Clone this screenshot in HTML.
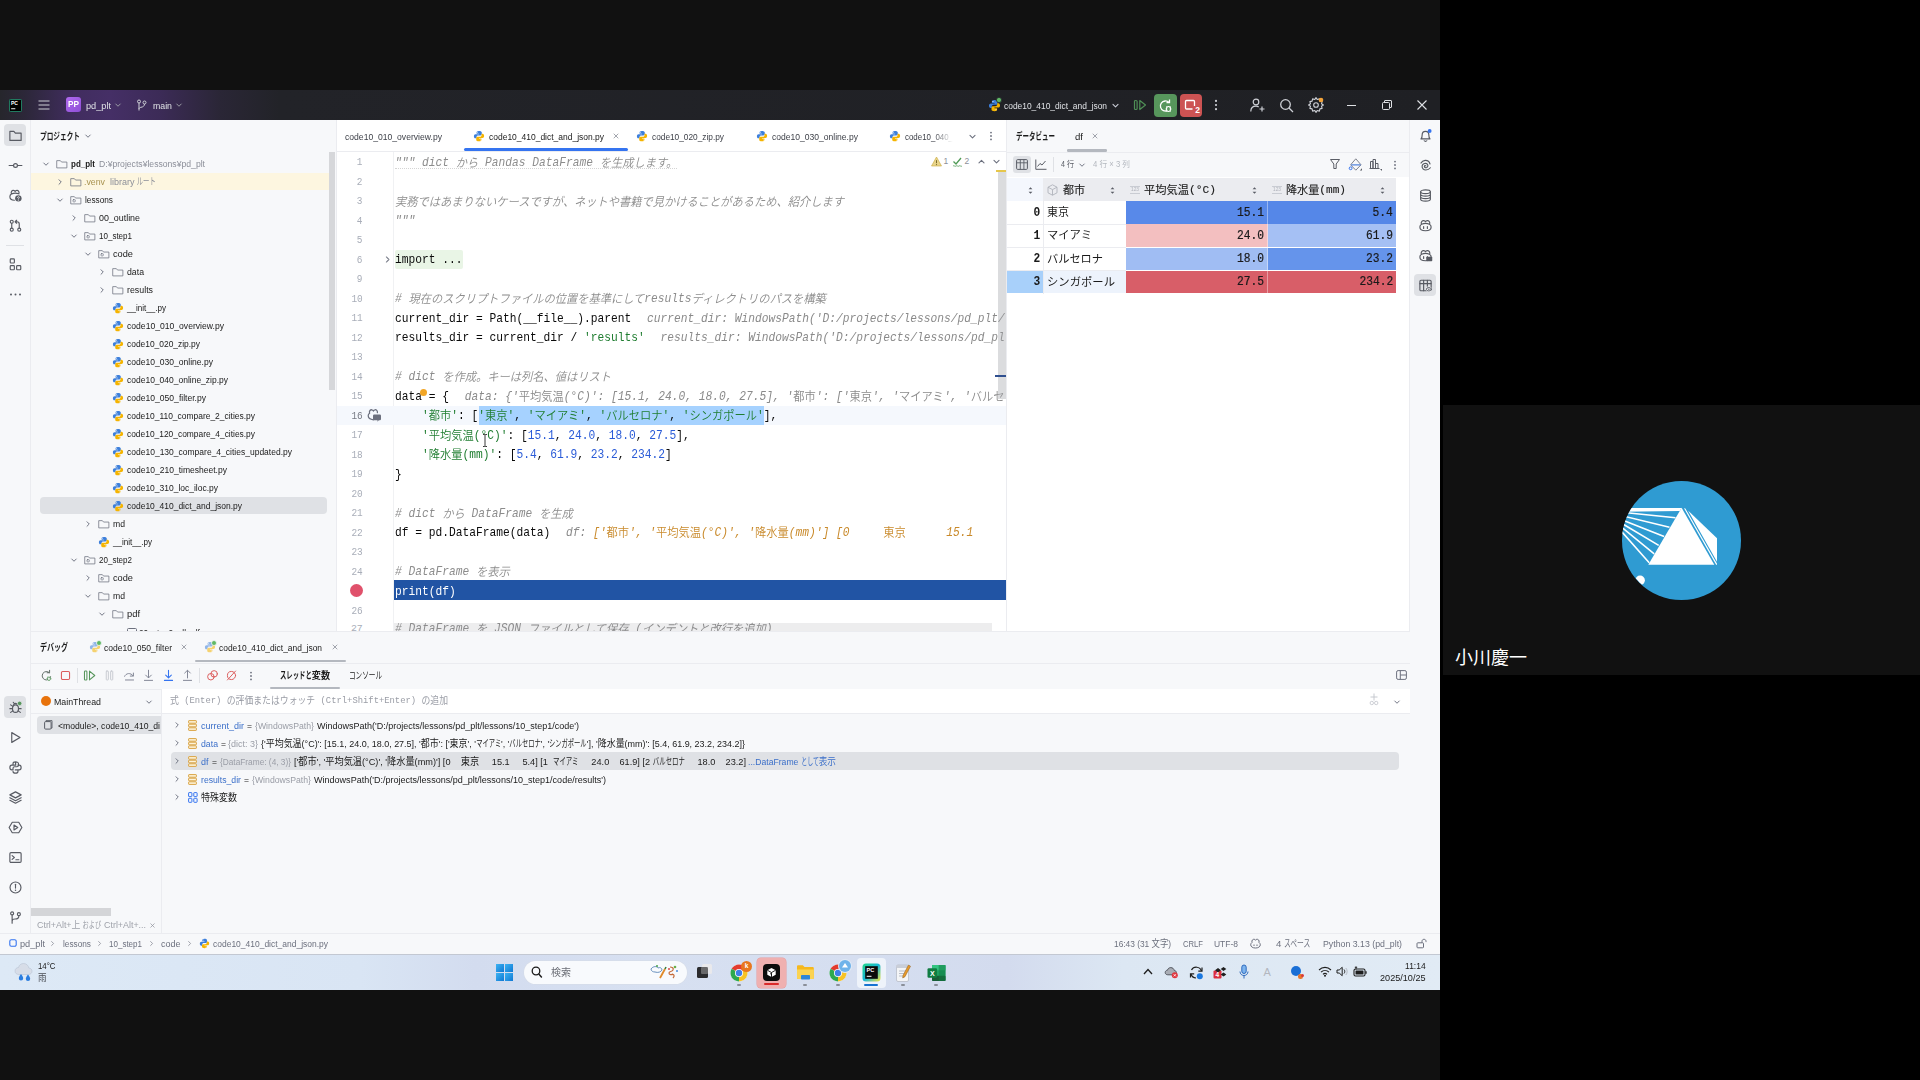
<!DOCTYPE html>
<html lang="ja"><head><meta charset="utf-8"><title>PyCharm screen share</title>
<style>
html,body{margin:0;padding:0;background:#000;}
body{width:1920px;height:1080px;overflow:hidden;position:relative;font-family:"Liberation Sans","Noto Sans CJK JP",sans-serif;}
.b{position:absolute;display:block;}
.t{position:absolute;white-space:nowrap;font-family:"Liberation Sans","Noto Sans CJK JP",sans-serif;}
.m{font-family:"Liberation Mono","Noto Sans CJK JP",monospace;}
.j{position:relative;top:1.1px;}
</style></head>
<body>
<div class="b" style="left:0px;top:0px;width:1440px;height:1080px;background:#111111;"></div>
<div class="b" style="left:1443px;top:405px;width:477px;height:270px;background:#111111;"></div>
<div class="b" style="left:0px;top:90px;width:1440px;height:900px;background:#f7f8fa;"></div>
<div class="b" style="left:1439px;top:120px;width:1px;height:870px;background:#ffffff;"></div>
<div class="b" style="left:0px;top:90px;width:1440px;height:30px;background:#1f2024;background:linear-gradient(90deg,#26262c 0,#2c2739 25px,#412d5f 75px,#452f66 110px,#3c2b57 160px,#2a2636 220px,#222328 280px,#1f2024 100%);"></div>
<svg class="b" style="left:8.5px;top:98.5px;" width="13" height="13" viewBox="0 0 14 14"><rect x=".5" y=".5" width="13" height="13" rx="1" fill="#000" stroke="#27a57c" stroke-width=".8"/><text x="2.2" y="6.8" font-family="Liberation Sans,sans-serif" font-weight="700" font-size="5.4" fill="#fff">PC</text><rect x="2.3" y="10" width="4.5" height="1" fill="#fff"/></svg>
<svg class="b" style="left:38px;top:99px;" width="12" height="12" viewBox="0 0 12 12"><path d="M0.500 2h11M0.500 6h11M0.500 10h11" stroke="#ced0d6" stroke-width="1.100"/></svg>
<div class="b" style="left:66px;top:97px;width:15px;height:15px;background:#a259e6;border-radius:3px;background:linear-gradient(135deg,#b06af0,#8f4fd6);"></div>
<div class="t" style="left:68.2px;top:98.80px;font-size:8.2px;line-height:12px;color:#ffffff;transform-origin:0 50%;transform:scaleX(1.0057);font-weight:700;">PP</div>
<div class="t" style="left:85.5px;top:97.50px;font-size:9.75px;line-height:15px;color:#dfe1e5;transform-origin:0 50%;transform:scaleX(0.9406);">pd_plt</div>
<svg class="b" style="left:113.5px;top:101.0px;" width="8" height="8" viewBox="0 0 16 16"><path d="M3.5 6l4.5 4.5L12.5 6" fill="none" stroke="#9da0a8" stroke-width="1.9" stroke-linecap="round" stroke-linejoin="round"/></svg>
<svg class="b" style="left:136px;top:99px;" width="11" height="12" viewBox="0 0 11 12"><circle cx="3" cy="2.500" r="1.500" fill="none" stroke="#ced0d6"/><circle cx="8.500" cy="3.500" r="1.500" fill="none" stroke="#ced0d6"/><path d="M3 4v7.500M8.500 5c0 2-1.500 3-3.500 3.300-1 .2-2 .6-2 1.700" fill="none" stroke="#ced0d6"/></svg>
<div class="t" style="left:152.5px;top:97.50px;font-size:9.75px;line-height:15px;color:#dfe1e5;transform-origin:0 50%;transform:scaleX(0.8987);">main</div>
<svg class="b" style="left:175.0px;top:101.0px;" width="8" height="8" viewBox="0 0 16 16"><path d="M3.5 6l4.5 4.5L12.5 6" fill="none" stroke="#9da0a8" stroke-width="1.9" stroke-linecap="round" stroke-linejoin="round"/></svg>
<svg class="b" style="left:987.5px;top:98.5px;" width="13" height="13" viewBox="0 0 16 16"><path d="M7.9 1.2c-2.6 0-3.1 1.1-3.1 2.1v1.6h3.3v.7H3.4C2 5.6 1.2 6.8 1.2 8.3s.7 2.8 2 2.8h1.5V9.3c0-1.2 1-2.1 2.2-2.1h3c1 0 1.8-.8 1.8-1.8V3.3c0-1.2-1.3-2.1-3.8-2.1z" fill="#3d7fdb"/><g transform="rotate(180 8 8.1)"><path d="M7.9 1.2c-2.6 0-3.1 1.1-3.1 2.1v1.6h3.3v.7H3.4C2 5.6 1.2 6.8 1.2 8.3s.7 2.8 2 2.8h1.5V9.3c0-1.2 1-2.1 2.2-2.1h3c1 0 1.8-.8 1.8-1.8V3.3c0-1.2-1.3-2.1-3.8-2.1z" fill="#f5b400"/></g><circle cx="6.1" cy="3" r=".65" fill="#fff"/><circle cx="9.9" cy="13.2" r=".65" fill="#fff"/></svg>
<svg class="b" style="left:996px;top:97px;" width="6" height="6" viewBox="0 0 6 6"><circle cx="3" cy="3" r="2.600" fill="#5fb865" stroke="#27282e" stroke-width=".8"/></svg>
<div class="t" style="left:1004px;top:97.50px;font-size:9.75px;line-height:15px;color:#dfe1e5;transform-origin:0 50%;transform:scaleX(0.8635);">code10_410_dict_and_json</div>
<svg class="b" style="left:1110.5px;top:100.5px;" width="9" height="9" viewBox="0 0 16 16"><path d="M3.5 6l4.5 4.5L12.5 6" fill="none" stroke="#c9ccd6" stroke-width="1.9" stroke-linecap="round" stroke-linejoin="round"/></svg>
<svg class="b" style="left:1133px;top:98px;" width="14" height="14" viewBox="0 0 14 14"><rect x="1.500" y="2.500" width="2.600" height="9" rx="1" fill="none" stroke="#4f8f56" stroke-width="1.200"/><path d="M6.800 2.500l5.700 4.500-5.700 4.500z" fill="none" stroke="#4f8f56" stroke-width="1.200" stroke-linejoin="round"/></svg>
<div class="b" style="left:1154px;top:94px;width:23px;height:23px;background:#57965c;border-radius:4px;"></div>
<svg class="b" style="left:1158px;top:98px;" width="15" height="15" viewBox="0 0 15 15"><path d="M11 4.500A5 5 0 1 0 12.300 9" fill="none" stroke="#fff" stroke-width="1.300"/><path d="M8.500 4.500h3v-3" fill="none" stroke="#fff" stroke-width="1.300"/><ellipse cx="10.500" cy="11" rx="2" ry="2.500" fill="#57965c" stroke="#fff" stroke-width="1.100"/><path d="M7.500 11h1M12.500 11h1M8 8.500l1 .8M13 8.500l-1 .8M8 13.500l1-.8M13 13.500l-1-.8" stroke="#fff" stroke-width=".9"/></svg>
<div class="b" style="left:1180px;top:94px;width:22px;height:23px;background:#cc5353;border-radius:4px;"></div>
<svg class="b" style="left:1184px;top:98px;" width="15" height="15" viewBox="0 0 15 15"><path d="M10.500 8V3.500a1 1 0 0 0-1-1h-7a1 1 0 0 0-1 1v6.500a1 1 0 0 0 1 1h6" fill="none" stroke="#fff" stroke-width="1.300"/></svg>
<div class="t" style="left:1195.3px;top:103.80px;font-size:8.5px;line-height:13px;color:#ffffff;transform-origin:0 50%;font-weight:700;">2</div>
<svg class="b" style="left:1210.0px;top:99.0px;" width="12" height="12" viewBox="0 0 16 16"><circle cx="8" cy="2.500" r="1.450" fill="#ced0d6"/><circle cx="8" cy="8" r="1.450" fill="#ced0d6"/><circle cx="8" cy="13.500" r="1.450" fill="#ced0d6"/></svg>
<svg class="b" style="left:1249px;top:97px;" width="16" height="16" viewBox="0 0 16 16"><circle cx="7" cy="5" r="2.800" fill="none" stroke="#ced0d6" stroke-width="1.200"/><path d="M1.800 14.500c0-3.500 2.200-5.300 5.200-5.300 1 0 2 .2 2.700.7M13 9.500v5M10.500 12h5" fill="none" stroke="#ced0d6" stroke-width="1.200"/></svg>
<svg class="b" style="left:1279px;top:98px;" width="15" height="15" viewBox="0 0 15 15"><circle cx="6.500" cy="6.500" r="4.800" fill="none" stroke="#ced0d6" stroke-width="1.300"/><path d="M10 10l4 4" stroke="#ced0d6" stroke-width="1.300"/></svg>
<svg class="b" style="left:1308px;top:97px;" width="16" height="16" viewBox="0 0 16 16"><path d="M8 1.800l1.200 1.900 2.200-.6.500 2.200 2.200.5-.600 2.200L15.400 9.200l-1.900 1.200.600 2.200-2.200.5-.5 2.200-2.200-.600L8 16.600l-1.200-1.900-2.200.600-.5-2.200-2.200-.5.600-2.200L.600 9.200l1.900-1.200-.600-2.200 2.200-.5.500-2.200 2.200.6z" transform="translate(0,-1.200)" fill="none" stroke="#ced0d6" stroke-width="1.100" stroke-linejoin="round"/><circle cx="8" cy="8" r="2.300" fill="none" stroke="#ced0d6" stroke-width="1.100"/><circle cx="13" cy="3" r="2.300" fill="#f2a33a"/></svg>
<div class="b" style="left:1347px;top:104.5px;width:9px;height:1px;background:#dfe1e5;"></div>
<svg class="b" style="left:1382px;top:100px;" width="10" height="10" viewBox="0 0 10 10"><rect x=".500" y="2.500" width="7" height="7" rx="1" fill="none" stroke="#dfe1e5"/><path d="M2.500 2.500v-1.500c0-.3.200-.5.500-.5h6c.3 0 .5.200.5.500v6c0 .3-.200.5-.5.5h-1.500" fill="none" stroke="#dfe1e5"/></svg>
<svg class="b" style="left:1417px;top:100px;" width="10" height="10" viewBox="0 0 10 10"><path d="M.500 .500l9 9M9.500 .500l-9 9" stroke="#dfe1e5" stroke-width="1.100"/></svg>
<div class="b" style="left:30px;top:120px;width:1px;height:813px;background:#ebecf0;"></div>
<div class="b" style="left:4px;top:124px;width:22px;height:22px;background:#dfe1e5;border-radius:4px;"></div>
<svg class="b" style="left:7.5px;top:127.5px;" width="15" height="15" viewBox="0 0 20 20"><path d="M2.5 4.5h5.3l2 2.4h7.7v9.6h-15z" fill="none" stroke="#585b63" stroke-width="1.55" stroke-linecap="round" stroke-linejoin="round"/></svg>
<svg class="b" style="left:7.5px;top:157.5px;" width="15" height="15" viewBox="0 0 20 20"><circle cx="10" cy="10" r="2.6" fill="none" stroke="#585b63" stroke-width="1.55" stroke-linecap="round" stroke-linejoin="round"/><path d="M1.5 10h5.9M12.6 10h5.9" fill="none" stroke="#585b63" stroke-width="1.55" stroke-linecap="round" stroke-linejoin="round"/></svg>
<svg class="b" style="left:7.5px;top:187.5px;" width="15" height="15" viewBox="0 0 20 20"><path d="M4.500 8c-1-3.500 1.200-5.300 3-4.800 1 .2 1.600.8 2 1.500.4-.7 1-1.300 2-1.500 1.800-.5 4 1.300 3 4.800M4.500 8c-1.300.8-2 2-2 3.500 0 2.500 2.500 4.500 6 4.800M4.800 7.800c2.500-1 7-1 9.400-.2" fill="none" stroke="#585b63" stroke-width="1.55" stroke-linecap="round" stroke-linejoin="round"/><circle cx="13.800" cy="13.800" r="4.300" fill="#585b63"/><path d="M12.600 12.600c.2-1.400 2.600-1.300 2.500.2-.1.900-1.300 1-1.300 2M13.800 16.300v.1" fill="none" stroke="#f7f8fa" stroke-width="1.100" stroke-linecap="round"/></svg>
<svg class="b" style="left:7.5px;top:217.5px;" width="15" height="15" viewBox="0 0 20 20"><circle cx="5" cy="5" r="2" fill="none" stroke="#585b63" stroke-width="1.55" stroke-linecap="round" stroke-linejoin="round"/><circle cx="5" cy="15.5" r="2" fill="none" stroke="#585b63" stroke-width="1.55" stroke-linecap="round" stroke-linejoin="round"/><circle cx="15" cy="15.5" r="2" fill="none" stroke="#585b63" stroke-width="1.55" stroke-linecap="round" stroke-linejoin="round"/><path d="M5 7v6.5M15 13.5V8c0-2-1-3-3-3h-2M11.5 3L9.5 5l2 2" fill="none" stroke="#585b63" stroke-width="1.55" stroke-linecap="round" stroke-linejoin="round"/></svg>
<svg class="b" style="left:7.5px;top:256.5px;" width="15" height="15" viewBox="0 0 20 20"><rect x="3" y="2.5" width="5.5" height="5.5" rx="1" fill="none" stroke="#585b63" stroke-width="1.55" stroke-linecap="round" stroke-linejoin="round"/><rect x="3" y="11.5" width="5.5" height="5.5" rx="1" fill="none" stroke="#585b63" stroke-width="1.55" stroke-linecap="round" stroke-linejoin="round"/><rect x="11.5" y="11.5" width="5.5" height="5.5" rx="1" fill="none" stroke="#585b63" stroke-width="1.55" stroke-linecap="round" stroke-linejoin="round"/></svg>
<svg class="b" style="left:7.5px;top:286.5px;" width="15" height="15" viewBox="0 0 20 20"><circle cx="4" cy="10" r="1.3" fill="#585b63"/><circle cx="10" cy="10" r="1.3" fill="#585b63"/><circle cx="16" cy="10" r="1.3" fill="#585b63"/></svg>
<div class="b" style="left:6px;top:245px;width:18px;height:1px;background:#dfe1e5;"></div>
<div class="b" style="left:4px;top:696px;width:22px;height:22px;background:#dfe1e5;border-radius:4px;"></div>
<svg class="b" style="left:7.5px;top:699.5px;" width="15" height="15" viewBox="0 0 20 20"><ellipse cx="10" cy="11.5" rx="4" ry="5" fill="none" stroke="#585b63" stroke-width="1.55" stroke-linecap="round" stroke-linejoin="round"/><path d="M7.5 7c0-1.5 1-2.5 2.5-2.5s2.500 1 2.500 2.500M6 11.500H2.500M6.500 8.500L3.500 6.500M6.500 14.500l-3 2M14 11.500h3.500M13.500 14.500l3 2M7 3l1.500 2" fill="none" stroke="#585b63" stroke-width="1.55" stroke-linecap="round" stroke-linejoin="round"/><circle cx="15.5" cy="4.500" r="3" fill="#57965c" stroke="#dfe1e5" stroke-width="1"/></svg>
<svg class="b" style="left:7.5px;top:729.5px;" width="15" height="15" viewBox="0 0 20 20"><path d="M5 3.500l11 6.500-11 6.500z" fill="none" stroke="#585b63" stroke-width="1.55" stroke-linecap="round" stroke-linejoin="round"/></svg>
<svg class="b" style="left:7.5px;top:759.5px;" width="15" height="15" viewBox="0 0 20 20"><path d="M10 2.500c-2.500 0-3.300 1-3.300 2.300v2h3.600M10.300 6.800H5c-1.700 0-2.500 1.400-2.500 3.200s.8 3.200 2.500 3.200h1.700v-2.200c0-1.200 1-2 2.200-2h3c1.200 0 2-.9 2-2V4.800c0-1.300-1.300-2.300-3.900-2.300z" fill="none" stroke="#585b63" stroke-width="1.55" stroke-linecap="round" stroke-linejoin="round"/><path d="M13.300 6.800H15c1.700 0 2.500 1.400 2.500 3.200s-.8 3.200-2.500 3.200H9.700M13.300 13.200v2c0 1.300-1 2.300-3.300 2.300s-3.300-1-3.300-2.300" fill="none" stroke="#585b63" stroke-width="1.55" stroke-linecap="round" stroke-linejoin="round"/></svg>
<svg class="b" style="left:7.5px;top:789.5px;" width="15" height="15" viewBox="0 0 20 20"><path d="M10 2.500l7.500 4-7.500 4-7.500-4zM2.500 10.200l7.500 4 7.500-4M2.500 13.700l7.500 4 7.500-4" fill="none" stroke="#585b63" stroke-width="1.55" stroke-linecap="round" stroke-linejoin="round"/></svg>
<svg class="b" style="left:7.5px;top:819.5px;" width="15" height="15" viewBox="0 0 20 20"><path d="M1.500 10L5.700 3h8.600l4.200 7-4.200 7H5.700z" fill="none" stroke="#585b63" stroke-width="1.55" stroke-linecap="round" stroke-linejoin="round"/><path d="M8 6.800l5 3.200-5 3.200z" fill="none" stroke="#585b63" stroke-width="1.55" stroke-linecap="round" stroke-linejoin="round"/></svg>
<svg class="b" style="left:7.5px;top:849.5px;" width="15" height="15" viewBox="0 0 20 20"><rect x="2.500" y="3.500" width="15" height="13" rx="1.500" fill="none" stroke="#585b63" stroke-width="1.55" stroke-linecap="round" stroke-linejoin="round"/><path d="M5.500 7.500l3 2.500-3 2.500M10.500 13h4" fill="none" stroke="#585b63" stroke-width="1.55" stroke-linecap="round" stroke-linejoin="round"/></svg>
<svg class="b" style="left:7.5px;top:879.5px;" width="15" height="15" viewBox="0 0 20 20"><circle cx="10" cy="10" r="7.300" fill="none" stroke="#585b63" stroke-width="1.55" stroke-linecap="round" stroke-linejoin="round"/><path d="M10 5.800v5" fill="none" stroke="#585b63" stroke-width="1.5" stroke-linecap="round" stroke-linejoin="round"/><circle cx="10" cy="13.800" r="1" fill="#585b63"/></svg>
<svg class="b" style="left:7.5px;top:909.5px;" width="15" height="15" viewBox="0 0 20 20"><circle cx="5.500" cy="4.500" r="2" fill="none" stroke="#585b63" stroke-width="1.55" stroke-linecap="round" stroke-linejoin="round"/><circle cx="14.500" cy="5.500" r="2" fill="none" stroke="#585b63" stroke-width="1.55" stroke-linecap="round" stroke-linejoin="round"/><path d="M5.500 6.500v11M14.500 7.500c0 3-2 4.500-5 4.500-2 0-4 .8-4 2.500" fill="none" stroke="#585b63" stroke-width="1.55" stroke-linecap="round" stroke-linejoin="round"/></svg>
<div class="t" style="left:40px;top:128.50px;font-size:9.75px;line-height:15px;color:#1a1a1a;transform-origin:0 50%;transform:scaleX(0.9767);font-weight:700;"><span style="display:inline-block;transform:scaleX(0.7);transform-origin:0 50%;margin-right:-17.55px">プロジェクト</span></div>
<svg class="b" style="left:84.0px;top:132.0px;" width="8" height="8" viewBox="0 0 16 16"><path d="M3.5 6l4.5 4.5L12.5 6" fill="none" stroke="#6c707e" stroke-width="1.9" stroke-linecap="round" stroke-linejoin="round"/></svg>
<div class="b" style="left:329px;top:152px;width:6px;height:238px;background:#d6d7da;border-radius:0;"></div>
<div class="b" style="left:336px;top:120px;width:1px;height:512px;background:#ebecf0;"></div>
<div class="b" style="left:31px;top:173px;width:298px;height:17px;background:#fdf6e0;"></div>
<div class="b" style="left:40px;top:497px;width:287px;height:17px;background:#dfe1e5;border-radius:4px;"></div>
<svg class="b" style="left:42.0px;top:159.5px;" width="8" height="8" viewBox="0 0 16 16"><path d="M3.5 6l4.5 4.5L12.5 6" fill="none" stroke="#6c707e" stroke-width="1.9" stroke-linecap="round" stroke-linejoin="round"/></svg>
<svg class="b" style="left:56.2px;top:157.5px;" width="12" height="12" viewBox="0 0 16 16"><path d="M1.5 3.5h4.3l1.6 1.9h7.1v7.8h-13z" fill="none" stroke="#6c707e" stroke-width="1" stroke-linecap="round" stroke-linejoin="round"/></svg>
<div class="t" style="left:71.2px;top:156.00px;font-size:9.75px;line-height:15px;color:#1a1a1a;transform-origin:0 50%;transform:scaleX(0.8205);font-weight:700;">pd_plt</div>
<div class="t" style="left:99.2px;top:156.00px;font-size:9.75px;line-height:15px;color:#8c8f99;transform-origin:0 50%;transform:scaleX(0.8849);">D:¥projects¥lessons¥pd_plt</div>
<svg class="b" style="left:56.0px;top:177.5px;" width="8" height="8" viewBox="0 0 16 16"><path d="M6 3.5l4.5 4.5L6 12.5" fill="none" stroke="#6c707e" stroke-width="1.9" stroke-linecap="round" stroke-linejoin="round"/></svg>
<svg class="b" style="left:70.2px;top:175.5px;" width="12" height="12" viewBox="0 0 16 16"><path d="M1.5 3.5h4.3l1.6 1.9h7.1v7.8h-13z" fill="none" stroke="#6c707e" stroke-width="1" stroke-linecap="round" stroke-linejoin="round"/></svg>
<div class="t" style="left:84.0px;top:174.00px;font-size:9.75px;line-height:15px;color:#a8924f;transform-origin:0 50%;transform:scaleX(0.9008);">.venv</div>
<div class="t" style="left:110.2px;top:174.00px;font-size:9.75px;line-height:15px;color:#8c8f99;transform-origin:0 50%;transform:scaleX(0.9246);">library <span style="display:inline-block;transform:scaleX(0.7);transform-origin:0 50%;margin-right:-8.78px">ルート</span></div>
<svg class="b" style="left:56.0px;top:195.5px;" width="8" height="8" viewBox="0 0 16 16"><path d="M3.5 6l4.5 4.5L12.5 6" fill="none" stroke="#6c707e" stroke-width="1.9" stroke-linecap="round" stroke-linejoin="round"/></svg>
<svg class="b" style="left:70.2px;top:193.5px;" width="12" height="12" viewBox="0 0 16 16"><path d="M1.5 3.5h4.3l1.6 1.9h7.1v7.8h-13z" fill="none" stroke="#6c707e" stroke-width="1" stroke-linecap="round" stroke-linejoin="round"/><rect x="4" y="7.5" width="3" height="3" rx=".6" fill="none" stroke="#6c707e" stroke-width="0.9" stroke-linecap="round" stroke-linejoin="round"/></svg>
<div class="t" style="left:85.2px;top:192.00px;font-size:9.75px;line-height:15px;color:#1a1a1a;transform-origin:0 50%;transform:scaleX(0.8469);">lessons</div>
<svg class="b" style="left:70.0px;top:213.5px;" width="8" height="8" viewBox="0 0 16 16"><path d="M6 3.5l4.5 4.5L6 12.5" fill="none" stroke="#6c707e" stroke-width="1.9" stroke-linecap="round" stroke-linejoin="round"/></svg>
<svg class="b" style="left:84.2px;top:211.5px;" width="12" height="12" viewBox="0 0 16 16"><path d="M1.5 3.5h4.3l1.6 1.9h7.1v7.8h-13z" fill="none" stroke="#6c707e" stroke-width="1" stroke-linecap="round" stroke-linejoin="round"/></svg>
<div class="t" style="left:99.2px;top:210.00px;font-size:9.75px;line-height:15px;color:#1a1a1a;transform-origin:0 50%;transform:scaleX(0.9111);">00_outline</div>
<svg class="b" style="left:70.0px;top:231.5px;" width="8" height="8" viewBox="0 0 16 16"><path d="M3.5 6l4.5 4.5L12.5 6" fill="none" stroke="#6c707e" stroke-width="1.9" stroke-linecap="round" stroke-linejoin="round"/></svg>
<svg class="b" style="left:84.2px;top:229.5px;" width="12" height="12" viewBox="0 0 16 16"><path d="M1.5 3.5h4.3l1.6 1.9h7.1v7.8h-13z" fill="none" stroke="#6c707e" stroke-width="1" stroke-linecap="round" stroke-linejoin="round"/><rect x="4" y="7.5" width="3" height="3" rx=".6" fill="none" stroke="#6c707e" stroke-width="0.9" stroke-linecap="round" stroke-linejoin="round"/></svg>
<div class="t" style="left:99.2px;top:228.00px;font-size:9.75px;line-height:15px;color:#1a1a1a;transform-origin:0 50%;transform:scaleX(0.8224);">10_step1</div>
<svg class="b" style="left:84.0px;top:249.5px;" width="8" height="8" viewBox="0 0 16 16"><path d="M3.5 6l4.5 4.5L12.5 6" fill="none" stroke="#6c707e" stroke-width="1.9" stroke-linecap="round" stroke-linejoin="round"/></svg>
<svg class="b" style="left:98.2px;top:247.5px;" width="12" height="12" viewBox="0 0 16 16"><path d="M1.5 3.5h4.3l1.6 1.9h7.1v7.8h-13z" fill="none" stroke="#6c707e" stroke-width="1" stroke-linecap="round" stroke-linejoin="round"/><rect x="4" y="7.5" width="3" height="3" rx=".6" fill="none" stroke="#6c707e" stroke-width="0.9" stroke-linecap="round" stroke-linejoin="round"/></svg>
<div class="t" style="left:113.2px;top:246.00px;font-size:9.75px;line-height:15px;color:#1a1a1a;transform-origin:0 50%;transform:scaleX(0.9453);">code</div>
<svg class="b" style="left:98.0px;top:267.5px;" width="8" height="8" viewBox="0 0 16 16"><path d="M6 3.5l4.5 4.5L6 12.5" fill="none" stroke="#6c707e" stroke-width="1.9" stroke-linecap="round" stroke-linejoin="round"/></svg>
<svg class="b" style="left:112.2px;top:265.5px;" width="12" height="12" viewBox="0 0 16 16"><path d="M1.5 3.5h4.3l1.6 1.9h7.1v7.8h-13z" fill="none" stroke="#6c707e" stroke-width="1" stroke-linecap="round" stroke-linejoin="round"/></svg>
<div class="t" style="left:127.2px;top:264.00px;font-size:9.75px;line-height:15px;color:#1a1a1a;transform-origin:0 50%;transform:scaleX(0.8955);">data</div>
<svg class="b" style="left:98.0px;top:285.5px;" width="8" height="8" viewBox="0 0 16 16"><path d="M6 3.5l4.5 4.5L6 12.5" fill="none" stroke="#6c707e" stroke-width="1.9" stroke-linecap="round" stroke-linejoin="round"/></svg>
<svg class="b" style="left:112.2px;top:283.5px;" width="12" height="12" viewBox="0 0 16 16"><path d="M1.5 3.5h4.3l1.6 1.9h7.1v7.8h-13z" fill="none" stroke="#6c707e" stroke-width="1" stroke-linecap="round" stroke-linejoin="round"/></svg>
<div class="t" style="left:127.2px;top:282.00px;font-size:9.75px;line-height:15px;color:#1a1a1a;transform-origin:0 50%;transform:scaleX(0.9053);">results</div>
<svg class="b" style="left:112.2px;top:301.5px;" width="12" height="12" viewBox="0 0 16 16"><path d="M7.9 1.2c-2.6 0-3.1 1.1-3.1 2.1v1.6h3.3v.7H3.4C2 5.6 1.2 6.8 1.2 8.3s.7 2.8 2 2.8h1.5V9.3c0-1.2 1-2.1 2.2-2.1h3c1 0 1.8-.8 1.8-1.8V3.3c0-1.2-1.3-2.1-3.8-2.1z" fill="#3d7fdb"/><g transform="rotate(180 8 8.1)"><path d="M7.9 1.2c-2.6 0-3.1 1.1-3.1 2.1v1.6h3.3v.7H3.4C2 5.6 1.2 6.8 1.2 8.3s.7 2.8 2 2.8h1.5V9.3c0-1.2 1-2.1 2.2-2.1h3c1 0 1.8-.8 1.8-1.8V3.3c0-1.2-1.3-2.1-3.8-2.1z" fill="#f5b400"/></g><circle cx="6.1" cy="3" r=".65" fill="#fff"/><circle cx="9.9" cy="13.2" r=".65" fill="#fff"/></svg>
<div class="t" style="left:127.2px;top:300.00px;font-size:9.75px;line-height:15px;color:#1a1a1a;transform-origin:0 50%;transform:scaleX(0.8268);">__init__.py</div>
<svg class="b" style="left:112.2px;top:319.5px;" width="12" height="12" viewBox="0 0 16 16"><path d="M7.9 1.2c-2.6 0-3.1 1.1-3.1 2.1v1.6h3.3v.7H3.4C2 5.6 1.2 6.8 1.2 8.3s.7 2.8 2 2.8h1.5V9.3c0-1.2 1-2.1 2.2-2.1h3c1 0 1.8-.8 1.8-1.8V3.3c0-1.2-1.3-2.1-3.8-2.1z" fill="#3d7fdb"/><g transform="rotate(180 8 8.1)"><path d="M7.9 1.2c-2.6 0-3.1 1.1-3.1 2.1v1.6h3.3v.7H3.4C2 5.6 1.2 6.8 1.2 8.3s.7 2.8 2 2.8h1.5V9.3c0-1.2 1-2.1 2.2-2.1h3c1 0 1.8-.8 1.8-1.8V3.3c0-1.2-1.3-2.1-3.8-2.1z" fill="#f5b400"/></g><circle cx="6.1" cy="3" r=".65" fill="#fff"/><circle cx="9.9" cy="13.2" r=".65" fill="#fff"/></svg>
<div class="t" style="left:127.2px;top:318.00px;font-size:9.75px;line-height:15px;color:#1a1a1a;transform-origin:0 50%;transform:scaleX(0.8814);">code10_010_overview.py</div>
<svg class="b" style="left:112.2px;top:337.5px;" width="12" height="12" viewBox="0 0 16 16"><path d="M7.9 1.2c-2.6 0-3.1 1.1-3.1 2.1v1.6h3.3v.7H3.4C2 5.6 1.2 6.8 1.2 8.3s.7 2.8 2 2.8h1.5V9.3c0-1.2 1-2.1 2.2-2.1h3c1 0 1.8-.8 1.8-1.8V3.3c0-1.2-1.3-2.1-3.8-2.1z" fill="#3d7fdb"/><g transform="rotate(180 8 8.1)"><path d="M7.9 1.2c-2.6 0-3.1 1.1-3.1 2.1v1.6h3.3v.7H3.4C2 5.6 1.2 6.8 1.2 8.3s.7 2.8 2 2.8h1.5V9.3c0-1.2 1-2.1 2.2-2.1h3c1 0 1.8-.8 1.8-1.8V3.3c0-1.2-1.3-2.1-3.8-2.1z" fill="#f5b400"/></g><circle cx="6.1" cy="3" r=".65" fill="#fff"/><circle cx="9.9" cy="13.2" r=".65" fill="#fff"/></svg>
<div class="t" style="left:127.2px;top:336.00px;font-size:9.75px;line-height:15px;color:#1a1a1a;transform-origin:0 50%;transform:scaleX(0.8631);">code10_020_zip.py</div>
<svg class="b" style="left:112.2px;top:355.5px;" width="12" height="12" viewBox="0 0 16 16"><path d="M7.9 1.2c-2.6 0-3.1 1.1-3.1 2.1v1.6h3.3v.7H3.4C2 5.6 1.2 6.8 1.2 8.3s.7 2.8 2 2.8h1.5V9.3c0-1.2 1-2.1 2.2-2.1h3c1 0 1.8-.8 1.8-1.8V3.3c0-1.2-1.3-2.1-3.8-2.1z" fill="#3d7fdb"/><g transform="rotate(180 8 8.1)"><path d="M7.9 1.2c-2.6 0-3.1 1.1-3.1 2.1v1.6h3.3v.7H3.4C2 5.6 1.2 6.8 1.2 8.3s.7 2.8 2 2.8h1.5V9.3c0-1.2 1-2.1 2.2-2.1h3c1 0 1.8-.8 1.8-1.8V3.3c0-1.2-1.3-2.1-3.8-2.1z" fill="#f5b400"/></g><circle cx="6.1" cy="3" r=".65" fill="#fff"/><circle cx="9.9" cy="13.2" r=".65" fill="#fff"/></svg>
<div class="t" style="left:127.2px;top:354.00px;font-size:9.75px;line-height:15px;color:#1a1a1a;transform-origin:0 50%;transform:scaleX(0.8763);">code10_030_online.py</div>
<svg class="b" style="left:112.2px;top:373.5px;" width="12" height="12" viewBox="0 0 16 16"><path d="M7.9 1.2c-2.6 0-3.1 1.1-3.1 2.1v1.6h3.3v.7H3.4C2 5.6 1.2 6.8 1.2 8.3s.7 2.8 2 2.8h1.5V9.3c0-1.2 1-2.1 2.2-2.1h3c1 0 1.8-.8 1.8-1.8V3.3c0-1.2-1.3-2.1-3.8-2.1z" fill="#3d7fdb"/><g transform="rotate(180 8 8.1)"><path d="M7.9 1.2c-2.6 0-3.1 1.1-3.1 2.1v1.6h3.3v.7H3.4C2 5.6 1.2 6.8 1.2 8.3s.7 2.8 2 2.8h1.5V9.3c0-1.2 1-2.1 2.2-2.1h3c1 0 1.8-.8 1.8-1.8V3.3c0-1.2-1.3-2.1-3.8-2.1z" fill="#f5b400"/></g><circle cx="6.1" cy="3" r=".65" fill="#fff"/><circle cx="9.9" cy="13.2" r=".65" fill="#fff"/></svg>
<div class="t" style="left:127.2px;top:372.00px;font-size:9.75px;line-height:15px;color:#1a1a1a;transform-origin:0 50%;transform:scaleX(0.8706);">code10_040_online_zip.py</div>
<svg class="b" style="left:112.2px;top:391.5px;" width="12" height="12" viewBox="0 0 16 16"><path d="M7.9 1.2c-2.6 0-3.1 1.1-3.1 2.1v1.6h3.3v.7H3.4C2 5.6 1.2 6.8 1.2 8.3s.7 2.8 2 2.8h1.5V9.3c0-1.2 1-2.1 2.2-2.1h3c1 0 1.8-.8 1.8-1.8V3.3c0-1.2-1.3-2.1-3.8-2.1z" fill="#3d7fdb"/><g transform="rotate(180 8 8.1)"><path d="M7.9 1.2c-2.6 0-3.1 1.1-3.1 2.1v1.6h3.3v.7H3.4C2 5.6 1.2 6.8 1.2 8.3s.7 2.8 2 2.8h1.5V9.3c0-1.2 1-2.1 2.2-2.1h3c1 0 1.8-.8 1.8-1.8V3.3c0-1.2-1.3-2.1-3.8-2.1z" fill="#f5b400"/></g><circle cx="6.1" cy="3" r=".65" fill="#fff"/><circle cx="9.9" cy="13.2" r=".65" fill="#fff"/></svg>
<div class="t" style="left:127.2px;top:390.00px;font-size:9.75px;line-height:15px;color:#1a1a1a;transform-origin:0 50%;transform:scaleX(0.8778);">code10_050_filter.py</div>
<svg class="b" style="left:112.2px;top:409.5px;" width="12" height="12" viewBox="0 0 16 16"><path d="M7.9 1.2c-2.6 0-3.1 1.1-3.1 2.1v1.6h3.3v.7H3.4C2 5.6 1.2 6.8 1.2 8.3s.7 2.8 2 2.8h1.5V9.3c0-1.2 1-2.1 2.2-2.1h3c1 0 1.8-.8 1.8-1.8V3.3c0-1.2-1.3-2.1-3.8-2.1z" fill="#3d7fdb"/><g transform="rotate(180 8 8.1)"><path d="M7.9 1.2c-2.6 0-3.1 1.1-3.1 2.1v1.6h3.3v.7H3.4C2 5.6 1.2 6.8 1.2 8.3s.7 2.8 2 2.8h1.5V9.3c0-1.2 1-2.1 2.2-2.1h3c1 0 1.8-.8 1.8-1.8V3.3c0-1.2-1.3-2.1-3.8-2.1z" fill="#f5b400"/></g><circle cx="6.1" cy="3" r=".65" fill="#fff"/><circle cx="9.9" cy="13.2" r=".65" fill="#fff"/></svg>
<div class="t" style="left:127.2px;top:408.00px;font-size:9.75px;line-height:15px;color:#1a1a1a;transform-origin:0 50%;transform:scaleX(0.8660);">code10_110_compare_2_cities.py</div>
<svg class="b" style="left:112.2px;top:427.5px;" width="12" height="12" viewBox="0 0 16 16"><path d="M7.9 1.2c-2.6 0-3.1 1.1-3.1 2.1v1.6h3.3v.7H3.4C2 5.6 1.2 6.8 1.2 8.3s.7 2.8 2 2.8h1.5V9.3c0-1.2 1-2.1 2.2-2.1h3c1 0 1.8-.8 1.8-1.8V3.3c0-1.2-1.3-2.1-3.8-2.1z" fill="#3d7fdb"/><g transform="rotate(180 8 8.1)"><path d="M7.9 1.2c-2.6 0-3.1 1.1-3.1 2.1v1.6h3.3v.7H3.4C2 5.6 1.2 6.8 1.2 8.3s.7 2.8 2 2.8h1.5V9.3c0-1.2 1-2.1 2.2-2.1h3c1 0 1.8-.8 1.8-1.8V3.3c0-1.2-1.3-2.1-3.8-2.1z" fill="#f5b400"/></g><circle cx="6.1" cy="3" r=".65" fill="#fff"/><circle cx="9.9" cy="13.2" r=".65" fill="#fff"/></svg>
<div class="t" style="left:127.2px;top:426.00px;font-size:9.75px;line-height:15px;color:#1a1a1a;transform-origin:0 50%;transform:scaleX(0.8618);">code10_120_compare_4_cities.py</div>
<svg class="b" style="left:112.2px;top:445.5px;" width="12" height="12" viewBox="0 0 16 16"><path d="M7.9 1.2c-2.6 0-3.1 1.1-3.1 2.1v1.6h3.3v.7H3.4C2 5.6 1.2 6.8 1.2 8.3s.7 2.8 2 2.8h1.5V9.3c0-1.2 1-2.1 2.2-2.1h3c1 0 1.8-.8 1.8-1.8V3.3c0-1.2-1.3-2.1-3.8-2.1z" fill="#3d7fdb"/><g transform="rotate(180 8 8.1)"><path d="M7.9 1.2c-2.6 0-3.1 1.1-3.1 2.1v1.6h3.3v.7H3.4C2 5.6 1.2 6.8 1.2 8.3s.7 2.8 2 2.8h1.5V9.3c0-1.2 1-2.1 2.2-2.1h3c1 0 1.8-.8 1.8-1.8V3.3c0-1.2-1.3-2.1-3.8-2.1z" fill="#f5b400"/></g><circle cx="6.1" cy="3" r=".65" fill="#fff"/><circle cx="9.9" cy="13.2" r=".65" fill="#fff"/></svg>
<div class="t" style="left:127.2px;top:444.00px;font-size:9.75px;line-height:15px;color:#1a1a1a;transform-origin:0 50%;transform:scaleX(0.8722);">code10_130_compare_4_cities_updated.py</div>
<svg class="b" style="left:112.2px;top:463.5px;" width="12" height="12" viewBox="0 0 16 16"><path d="M7.9 1.2c-2.6 0-3.1 1.1-3.1 2.1v1.6h3.3v.7H3.4C2 5.6 1.2 6.8 1.2 8.3s.7 2.8 2 2.8h1.5V9.3c0-1.2 1-2.1 2.2-2.1h3c1 0 1.8-.8 1.8-1.8V3.3c0-1.2-1.3-2.1-3.8-2.1z" fill="#3d7fdb"/><g transform="rotate(180 8 8.1)"><path d="M7.9 1.2c-2.6 0-3.1 1.1-3.1 2.1v1.6h3.3v.7H3.4C2 5.6 1.2 6.8 1.2 8.3s.7 2.8 2 2.8h1.5V9.3c0-1.2 1-2.1 2.2-2.1h3c1 0 1.8-.8 1.8-1.8V3.3c0-1.2-1.3-2.1-3.8-2.1z" fill="#f5b400"/></g><circle cx="6.1" cy="3" r=".65" fill="#fff"/><circle cx="9.9" cy="13.2" r=".65" fill="#fff"/></svg>
<div class="t" style="left:127.2px;top:462.00px;font-size:9.75px;line-height:15px;color:#1a1a1a;transform-origin:0 50%;transform:scaleX(0.8742);">code10_210_timesheet.py</div>
<svg class="b" style="left:112.2px;top:481.5px;" width="12" height="12" viewBox="0 0 16 16"><path d="M7.9 1.2c-2.6 0-3.1 1.1-3.1 2.1v1.6h3.3v.7H3.4C2 5.6 1.2 6.8 1.2 8.3s.7 2.8 2 2.8h1.5V9.3c0-1.2 1-2.1 2.2-2.1h3c1 0 1.8-.8 1.8-1.8V3.3c0-1.2-1.3-2.1-3.8-2.1z" fill="#3d7fdb"/><g transform="rotate(180 8 8.1)"><path d="M7.9 1.2c-2.6 0-3.1 1.1-3.1 2.1v1.6h3.3v.7H3.4C2 5.6 1.2 6.8 1.2 8.3s.7 2.8 2 2.8h1.5V9.3c0-1.2 1-2.1 2.2-2.1h3c1 0 1.8-.8 1.8-1.8V3.3c0-1.2-1.3-2.1-3.8-2.1z" fill="#f5b400"/></g><circle cx="6.1" cy="3" r=".65" fill="#fff"/><circle cx="9.9" cy="13.2" r=".65" fill="#fff"/></svg>
<div class="t" style="left:127.2px;top:480.00px;font-size:9.75px;line-height:15px;color:#1a1a1a;transform-origin:0 50%;transform:scaleX(0.8698);">code10_310_loc_iloc.py</div>
<svg class="b" style="left:112.2px;top:499.5px;" width="12" height="12" viewBox="0 0 16 16"><path d="M7.9 1.2c-2.6 0-3.1 1.1-3.1 2.1v1.6h3.3v.7H3.4C2 5.6 1.2 6.8 1.2 8.3s.7 2.8 2 2.8h1.5V9.3c0-1.2 1-2.1 2.2-2.1h3c1 0 1.8-.8 1.8-1.8V3.3c0-1.2-1.3-2.1-3.8-2.1z" fill="#3d7fdb"/><g transform="rotate(180 8 8.1)"><path d="M7.9 1.2c-2.6 0-3.1 1.1-3.1 2.1v1.6h3.3v.7H3.4C2 5.6 1.2 6.8 1.2 8.3s.7 2.8 2 2.8h1.5V9.3c0-1.2 1-2.1 2.2-2.1h3c1 0 1.8-.8 1.8-1.8V3.3c0-1.2-1.3-2.1-3.8-2.1z" fill="#f5b400"/></g><circle cx="6.1" cy="3" r=".65" fill="#fff"/><circle cx="9.9" cy="13.2" r=".65" fill="#fff"/></svg>
<div class="t" style="left:127.2px;top:498.00px;font-size:9.75px;line-height:15px;color:#1a1a1a;transform-origin:0 50%;transform:scaleX(0.8694);">code10_410_dict_and_json.py</div>
<svg class="b" style="left:84.0px;top:519.5px;" width="8" height="8" viewBox="0 0 16 16"><path d="M6 3.5l4.5 4.5L6 12.5" fill="none" stroke="#6c707e" stroke-width="1.9" stroke-linecap="round" stroke-linejoin="round"/></svg>
<svg class="b" style="left:98.2px;top:517.5px;" width="12" height="12" viewBox="0 0 16 16"><path d="M1.5 3.5h4.3l1.6 1.9h7.1v7.8h-13z" fill="none" stroke="#6c707e" stroke-width="1" stroke-linecap="round" stroke-linejoin="round"/></svg>
<div class="t" style="left:113.2px;top:516.00px;font-size:9.75px;line-height:15px;color:#1a1a1a;transform-origin:0 50%;transform:scaleX(0.8858);">md</div>
<svg class="b" style="left:98.2px;top:535.5px;" width="12" height="12" viewBox="0 0 16 16"><path d="M7.9 1.2c-2.6 0-3.1 1.1-3.1 2.1v1.6h3.3v.7H3.4C2 5.6 1.2 6.8 1.2 8.3s.7 2.8 2 2.8h1.5V9.3c0-1.2 1-2.1 2.2-2.1h3c1 0 1.8-.8 1.8-1.8V3.3c0-1.2-1.3-2.1-3.8-2.1z" fill="#3d7fdb"/><g transform="rotate(180 8 8.1)"><path d="M7.9 1.2c-2.6 0-3.1 1.1-3.1 2.1v1.6h3.3v.7H3.4C2 5.6 1.2 6.8 1.2 8.3s.7 2.8 2 2.8h1.5V9.3c0-1.2 1-2.1 2.2-2.1h3c1 0 1.8-.8 1.8-1.8V3.3c0-1.2-1.3-2.1-3.8-2.1z" fill="#f5b400"/></g><circle cx="6.1" cy="3" r=".65" fill="#fff"/><circle cx="9.9" cy="13.2" r=".65" fill="#fff"/></svg>
<div class="t" style="left:113.2px;top:534.00px;font-size:9.75px;line-height:15px;color:#1a1a1a;transform-origin:0 50%;transform:scaleX(0.8268);">__init__.py</div>
<svg class="b" style="left:70.0px;top:555.5px;" width="8" height="8" viewBox="0 0 16 16"><path d="M3.5 6l4.5 4.5L12.5 6" fill="none" stroke="#6c707e" stroke-width="1.9" stroke-linecap="round" stroke-linejoin="round"/></svg>
<svg class="b" style="left:84.2px;top:553.5px;" width="12" height="12" viewBox="0 0 16 16"><path d="M1.5 3.5h4.3l1.6 1.9h7.1v7.8h-13z" fill="none" stroke="#6c707e" stroke-width="1" stroke-linecap="round" stroke-linejoin="round"/><rect x="4" y="7.5" width="3" height="3" rx=".6" fill="none" stroke="#6c707e" stroke-width="0.9" stroke-linecap="round" stroke-linejoin="round"/></svg>
<div class="t" style="left:99.2px;top:552.00px;font-size:9.75px;line-height:15px;color:#1a1a1a;transform-origin:0 50%;transform:scaleX(0.8224);">20_step2</div>
<svg class="b" style="left:84.0px;top:573.5px;" width="8" height="8" viewBox="0 0 16 16"><path d="M6 3.5l4.5 4.5L6 12.5" fill="none" stroke="#6c707e" stroke-width="1.9" stroke-linecap="round" stroke-linejoin="round"/></svg>
<svg class="b" style="left:98.2px;top:571.5px;" width="12" height="12" viewBox="0 0 16 16"><path d="M1.5 3.5h4.3l1.6 1.9h7.1v7.8h-13z" fill="none" stroke="#6c707e" stroke-width="1" stroke-linecap="round" stroke-linejoin="round"/><rect x="4" y="7.5" width="3" height="3" rx=".6" fill="none" stroke="#6c707e" stroke-width="0.9" stroke-linecap="round" stroke-linejoin="round"/></svg>
<div class="t" style="left:113.2px;top:570.00px;font-size:9.75px;line-height:15px;color:#1a1a1a;transform-origin:0 50%;transform:scaleX(0.9453);">code</div>
<svg class="b" style="left:84.0px;top:591.5px;" width="8" height="8" viewBox="0 0 16 16"><path d="M3.5 6l4.5 4.5L12.5 6" fill="none" stroke="#6c707e" stroke-width="1.9" stroke-linecap="round" stroke-linejoin="round"/></svg>
<svg class="b" style="left:98.2px;top:589.5px;" width="12" height="12" viewBox="0 0 16 16"><path d="M1.5 3.5h4.3l1.6 1.9h7.1v7.8h-13z" fill="none" stroke="#6c707e" stroke-width="1" stroke-linecap="round" stroke-linejoin="round"/></svg>
<div class="t" style="left:113.2px;top:588.00px;font-size:9.75px;line-height:15px;color:#1a1a1a;transform-origin:0 50%;transform:scaleX(0.8858);">md</div>
<svg class="b" style="left:98.0px;top:609.5px;" width="8" height="8" viewBox="0 0 16 16"><path d="M3.5 6l4.5 4.5L12.5 6" fill="none" stroke="#6c707e" stroke-width="1.9" stroke-linecap="round" stroke-linejoin="round"/></svg>
<svg class="b" style="left:112.2px;top:607.5px;" width="12" height="12" viewBox="0 0 16 16"><path d="M1.5 3.5h4.3l1.6 1.9h7.1v7.8h-13z" fill="none" stroke="#6c707e" stroke-width="1" stroke-linecap="round" stroke-linejoin="round"/></svg>
<div class="t" style="left:127.2px;top:606.00px;font-size:9.75px;line-height:15px;color:#1a1a1a;transform-origin:0 50%;transform:scaleX(0.9585);">pdf</div>
<div class="b" style="left:31px;top:622px;width:305px;height:8.500px;overflow:hidden"><div class="t" style="left:108px;top:3.500px;font-size:9.75px;line-height:14px;color:#1a1a1a;transform-origin:0 50%;transform:scaleX(.85)">20_step2_all.pdf</div><svg class="b" style="left:96px;top:5.500px" width="10" height="12" viewBox="0 0 10 12"><rect x=".5" y=".5" width="9" height="11" rx="1" fill="none" stroke="#6c707e"/></svg></div>
<div class="b" style="left:337px;top:120px;width:669px;height:512px;background:#ffffff;"></div>
<div class="b" style="left:337px;top:151px;width:669px;height:1px;background:#ebecf0;"></div>
<div class="t" style="left:345px;top:128.50px;font-size:9.75px;line-height:15px;color:#3c3f47;transform-origin:0 50%;transform:scaleX(0.8814);">code10_010_overview.py</div>
<svg class="b" style="left:473.0px;top:130.0px;" width="12" height="12" viewBox="0 0 16 16"><path d="M7.9 1.2c-2.6 0-3.1 1.1-3.1 2.1v1.6h3.3v.7H3.4C2 5.6 1.2 6.8 1.2 8.3s.7 2.8 2 2.8h1.5V9.3c0-1.2 1-2.1 2.2-2.1h3c1 0 1.8-.8 1.8-1.8V3.3c0-1.2-1.3-2.1-3.8-2.1z" fill="#3d7fdb"/><g transform="rotate(180 8 8.1)"><path d="M7.9 1.2c-2.6 0-3.1 1.1-3.1 2.1v1.6h3.3v.7H3.4C2 5.6 1.2 6.8 1.2 8.3s.7 2.8 2 2.8h1.5V9.3c0-1.2 1-2.1 2.2-2.1h3c1 0 1.8-.8 1.8-1.8V3.3c0-1.2-1.3-2.1-3.8-2.1z" fill="#f5b400"/></g><circle cx="6.1" cy="3" r=".65" fill="#fff"/><circle cx="9.9" cy="13.2" r=".65" fill="#fff"/></svg>
<div class="t" style="left:489px;top:128.50px;font-size:9.75px;line-height:15px;color:#1a1a1a;transform-origin:0 50%;transform:scaleX(0.8694);">code10_410_dict_and_json.py</div>
<svg class="b" style="left:611.5px;top:131.5px;" width="8" height="8" viewBox="0 0 16 16"><path d="M4 4l8 8M12 4l-8 8" fill="none" stroke="#8c8f99" stroke-width="1.6" stroke-linecap="round" stroke-linejoin="round"/></svg>
<div class="b" style="left:464px;top:148px;width:164px;height:3px;background:#3574f0;border-radius:1.5px;"></div>
<svg class="b" style="left:636.0px;top:130.0px;" width="12" height="12" viewBox="0 0 16 16"><path d="M7.9 1.2c-2.6 0-3.1 1.1-3.1 2.1v1.6h3.3v.7H3.4C2 5.6 1.2 6.8 1.2 8.3s.7 2.8 2 2.8h1.5V9.3c0-1.2 1-2.1 2.2-2.1h3c1 0 1.8-.8 1.8-1.8V3.3c0-1.2-1.3-2.1-3.8-2.1z" fill="#3d7fdb"/><g transform="rotate(180 8 8.1)"><path d="M7.9 1.2c-2.6 0-3.1 1.1-3.1 2.1v1.6h3.3v.7H3.4C2 5.6 1.2 6.8 1.2 8.3s.7 2.8 2 2.8h1.5V9.3c0-1.2 1-2.1 2.2-2.1h3c1 0 1.8-.8 1.8-1.8V3.3c0-1.2-1.3-2.1-3.8-2.1z" fill="#f5b400"/></g><circle cx="6.1" cy="3" r=".65" fill="#fff"/><circle cx="9.9" cy="13.2" r=".65" fill="#fff"/></svg>
<div class="t" style="left:652px;top:128.50px;font-size:9.75px;line-height:15px;color:#3c3f47;transform-origin:0 50%;transform:scaleX(0.8513);">code10_020_zip.py</div>
<svg class="b" style="left:756.0px;top:130.0px;" width="12" height="12" viewBox="0 0 16 16"><path d="M7.9 1.2c-2.6 0-3.1 1.1-3.1 2.1v1.6h3.3v.7H3.4C2 5.6 1.2 6.8 1.2 8.3s.7 2.8 2 2.8h1.5V9.3c0-1.2 1-2.1 2.2-2.1h3c1 0 1.8-.8 1.8-1.8V3.3c0-1.2-1.3-2.1-3.8-2.1z" fill="#3d7fdb"/><g transform="rotate(180 8 8.1)"><path d="M7.9 1.2c-2.6 0-3.1 1.1-3.1 2.1v1.6h3.3v.7H3.4C2 5.6 1.2 6.8 1.2 8.3s.7 2.8 2 2.8h1.5V9.3c0-1.2 1-2.1 2.2-2.1h3c1 0 1.8-.8 1.8-1.8V3.3c0-1.2-1.3-2.1-3.8-2.1z" fill="#f5b400"/></g><circle cx="6.1" cy="3" r=".65" fill="#fff"/><circle cx="9.9" cy="13.2" r=".65" fill="#fff"/></svg>
<div class="t" style="left:772px;top:128.50px;font-size:9.75px;line-height:15px;color:#3c3f47;transform-origin:0 50%;transform:scaleX(0.8763);">code10_030_online.py</div>
<svg class="b" style="left:889.0px;top:130.0px;" width="12" height="12" viewBox="0 0 16 16"><path d="M7.9 1.2c-2.6 0-3.1 1.1-3.1 2.1v1.6h3.3v.7H3.4C2 5.6 1.2 6.8 1.2 8.3s.7 2.8 2 2.8h1.5V9.3c0-1.2 1-2.1 2.2-2.1h3c1 0 1.8-.8 1.8-1.8V3.3c0-1.2-1.3-2.1-3.8-2.1z" fill="#3d7fdb"/><g transform="rotate(180 8 8.1)"><path d="M7.9 1.2c-2.6 0-3.1 1.1-3.1 2.1v1.6h3.3v.7H3.4C2 5.6 1.2 6.8 1.2 8.3s.7 2.8 2 2.8h1.5V9.3c0-1.2 1-2.1 2.2-2.1h3c1 0 1.8-.8 1.8-1.8V3.3c0-1.2-1.3-2.1-3.8-2.1z" fill="#f5b400"/></g><circle cx="6.1" cy="3" r=".65" fill="#fff"/><circle cx="9.9" cy="13.2" r=".65" fill="#fff"/></svg>
<div class="t" style="left:905px;top:128.50px;font-size:9.75px;line-height:15px;color:#3c3f47;transform-origin:0 50%;transform:scaleX(0.8121);-webkit-mask-image:linear-gradient(90deg,#000 60%,transparent 100%);">code10_040_</div>
<svg class="b" style="left:967.5px;top:131.5px;" width="9" height="9" viewBox="0 0 16 16"><path d="M3.5 6l4.5 4.5L12.5 6" fill="none" stroke="#6c707e" stroke-width="1.9" stroke-linecap="round" stroke-linejoin="round"/></svg>
<svg class="b" style="left:986.0px;top:131.0px;" width="10" height="10" viewBox="0 0 16 16"><circle cx="8" cy="2.500" r="1.450" fill="#6c707e"/><circle cx="8" cy="8" r="1.450" fill="#6c707e"/><circle cx="8" cy="13.500" r="1.450" fill="#6c707e"/></svg>
<div class="b" style="left:393px;top:152px;width:1px;height:480px;background:#f0f1f3;"></div>
<svg class="b" style="left:931px;top:156px;" width="11" height="11" viewBox="0 0 11 11"><path d="M5.500 1l5 9h-10z" fill="#e8d48a" stroke="#c9a93a" stroke-width=".6"/><path d="M5.500 4.200v3" stroke="#7a6a2a" stroke-width="1"/><circle cx="5.500" cy="8.600" r=".6" fill="#7a6a2a"/></svg>
<div class="t" style="left:943.5px;top:155.00px;font-size:8.5px;line-height:13px;color:#8c8f99;transform-origin:0 50%;">1</div>
<svg class="b" style="left:952px;top:156px;" width="11" height="11" viewBox="0 0 11 11"><path d="M1.500 5.500l2.500 2.500 5-6" fill="none" stroke="#4f9a55" stroke-width="1.300"/><path d="M1 10c1-1 2 1 3 0s2 1 3 0 2 1 3 0" fill="none" stroke="#4f9a55" stroke-width=".8"/></svg>
<div class="t" style="left:964.5px;top:155.00px;font-size:8.5px;line-height:13px;color:#8c8f99;transform-origin:0 50%;">2</div>
<svg class="b" style="left:976.5px;top:157.0px;" width="9" height="9" viewBox="0 0 16 16"><path d="M3.5 10.5L8 6l4.5 4.5" fill="none" stroke="#6c707e" stroke-width="1.9" stroke-linecap="round" stroke-linejoin="round"/></svg>
<svg class="b" style="left:991.5px;top:157.0px;" width="9" height="9" viewBox="0 0 16 16"><path d="M3.5 6l4.5 4.5L12.5 6" fill="none" stroke="#6c707e" stroke-width="1.9" stroke-linecap="round" stroke-linejoin="round"/></svg>
<div class="b" style="left:337px;top:405.5px;width:669px;height:19px;background:#f5f8fd;"></div>
<div class="b" style="left:478.5px;top:405.5px;width:285.5px;height:19px;background:#a6d2ff;"></div>
<div class="b" style="left:394px;top:580.4px;width:612px;height:19.5px;background:#2154a4;"></div>
<div class="b" style="left:395px;top:249.5px;width:68px;height:19px;background:#e9f5e6;border-radius:2px;"></div>
<div class="t m" style="right:1557.2px;top:154.20px;font-size:10.6px;line-height:16px;color:#a8adb8;transform-origin:100% 50%;transform:scaleX(0.8885);">1</div>
<div class="t m" style="right:1557.2px;top:173.70px;font-size:10.6px;line-height:16px;color:#a8adb8;transform-origin:100% 50%;transform:scaleX(0.8885);">2</div>
<div class="t m" style="right:1557.2px;top:193.20px;font-size:10.6px;line-height:16px;color:#a8adb8;transform-origin:100% 50%;transform:scaleX(0.8885);">3</div>
<div class="t m" style="right:1557.2px;top:212.70px;font-size:10.6px;line-height:16px;color:#a8adb8;transform-origin:100% 50%;transform:scaleX(0.8885);">4</div>
<div class="t m" style="right:1557.2px;top:232.20px;font-size:10.6px;line-height:16px;color:#a8adb8;transform-origin:100% 50%;transform:scaleX(0.8885);">5</div>
<div class="t m" style="right:1557.2px;top:251.70px;font-size:10.6px;line-height:16px;color:#a8adb8;transform-origin:100% 50%;transform:scaleX(0.8885);">6</div>
<div class="t m" style="right:1557.2px;top:271.20px;font-size:10.6px;line-height:16px;color:#a8adb8;transform-origin:100% 50%;transform:scaleX(0.8885);">9</div>
<div class="t m" style="right:1557.2px;top:290.70px;font-size:10.6px;line-height:16px;color:#a8adb8;transform-origin:100% 50%;transform:scaleX(0.8885);">10</div>
<div class="t m" style="right:1557.2px;top:310.20px;font-size:10.6px;line-height:16px;color:#a8adb8;transform-origin:100% 50%;transform:scaleX(0.8885);">11</div>
<div class="t m" style="right:1557.2px;top:329.70px;font-size:10.6px;line-height:16px;color:#a8adb8;transform-origin:100% 50%;transform:scaleX(0.8885);">12</div>
<div class="t m" style="right:1557.2px;top:349.20px;font-size:10.6px;line-height:16px;color:#a8adb8;transform-origin:100% 50%;transform:scaleX(0.8885);">13</div>
<div class="t m" style="right:1557.2px;top:368.70px;font-size:10.6px;line-height:16px;color:#a8adb8;transform-origin:100% 50%;transform:scaleX(0.8885);">14</div>
<div class="t m" style="right:1557.2px;top:388.20px;font-size:10.6px;line-height:16px;color:#a8adb8;transform-origin:100% 50%;transform:scaleX(0.8885);">15</div>
<div class="t m" style="right:1557.2px;top:407.70px;font-size:10.6px;line-height:16px;color:#767a84;transform-origin:100% 50%;transform:scaleX(0.8885);">16</div>
<div class="t m" style="right:1557.2px;top:427.20px;font-size:10.6px;line-height:16px;color:#a8adb8;transform-origin:100% 50%;transform:scaleX(0.8885);">17</div>
<div class="t m" style="right:1557.2px;top:446.70px;font-size:10.6px;line-height:16px;color:#a8adb8;transform-origin:100% 50%;transform:scaleX(0.8885);">18</div>
<div class="t m" style="right:1557.2px;top:466.20px;font-size:10.6px;line-height:16px;color:#a8adb8;transform-origin:100% 50%;transform:scaleX(0.8885);">19</div>
<div class="t m" style="right:1557.2px;top:485.70px;font-size:10.6px;line-height:16px;color:#a8adb8;transform-origin:100% 50%;transform:scaleX(0.8885);">20</div>
<div class="t m" style="right:1557.2px;top:505.20px;font-size:10.6px;line-height:16px;color:#a8adb8;transform-origin:100% 50%;transform:scaleX(0.8885);">21</div>
<div class="t m" style="right:1557.2px;top:524.70px;font-size:10.6px;line-height:16px;color:#a8adb8;transform-origin:100% 50%;transform:scaleX(0.8885);">22</div>
<div class="t m" style="right:1557.2px;top:544.20px;font-size:10.6px;line-height:16px;color:#a8adb8;transform-origin:100% 50%;transform:scaleX(0.8885);">23</div>
<div class="t m" style="right:1557.2px;top:563.70px;font-size:10.6px;line-height:16px;color:#a8adb8;transform-origin:100% 50%;transform:scaleX(0.8885);">24</div>
<div class="t m" style="right:1557.2px;top:602.70px;font-size:10.6px;line-height:16px;color:#a8adb8;transform-origin:100% 50%;transform:scaleX(0.8885);">26</div>
<div class="b" style="left:349.5px;top:583.5px;width:13px;height:13px;background:#e0516b;border-radius:50%;"></div>
<svg class="b" style="left:382.5px;top:255.3px;" width="9" height="9" viewBox="0 0 16 16"><path d="M6 3.5l4.5 4.5L6 12.5" fill="none" stroke="#7a7e8a" stroke-width="1.9" stroke-linecap="round" stroke-linejoin="round"/></svg>
<svg class="b" style="left:366.5px;top:408.3px;" width="14" height="14" viewBox="0 0 14 14"><path d="M6.500 11.800C3.500 11.500 1.200 10 1.200 7.800c0-1 .5-1.900 1.400-2.500-.7-2.500.9-3.800 2.300-3.500.7.100 1.200.6 1.500 1.100.3-.5.800-1 1.500-1.100 1.300-.3 2.800.8 2.500 2.800" fill="none" stroke="#6c707e" stroke-width="1.250" stroke-linecap="round"/><path d="M7.200 6.500h5.600a1.200 1.200 0 0 1 1.200 1.200v3.300a1.200 1.200 0 0 1-1.200 1.200h-1l-1.300 1.500v-1.500H7.200A1.200 1.200 0 0 1 6 11V7.700a1.200 1.200 0 0 1 1.200-1.200z" fill="#6c707e"/></svg>
<div class="t m" style="left:395.2px;top:153.80px;font-size:12.1px;line-height:19px;color:#0a0a0a;transform-origin:0 50%;white-space:pre;font-weight:350;transform:scaleX(.9298);"><span style="color:#8c8c8c;font-style:italic;">&quot;&quot;&quot; dict <span class="j">から</span> Pandas DataFrame <span class="j">を生成します。</span></span></div>
<div class="b" style="left:395px;top:167px;width:282px;height:1px;background:transparent;border-bottom:1px dotted #d4d4d4;"></div>
<div class="t m" style="left:395.2px;top:192.80px;font-size:12.1px;line-height:19px;color:#0a0a0a;transform-origin:0 50%;white-space:pre;font-weight:350;transform:scaleX(.9298);"><span style="color:#8c8c8c;font-style:italic;"><span class="j">実務ではあまりないケースですが、ネットや書籍で見かけることがあるため、紹介します</span></span></div>
<div class="t m" style="left:395.2px;top:212.30px;font-size:12.1px;line-height:19px;color:#0a0a0a;transform-origin:0 50%;white-space:pre;font-weight:350;transform:scaleX(.9298);"><span style="color:#8c8c8c;font-style:italic;">&quot;&quot;&quot;</span></div>
<div class="t m" style="left:395.2px;top:251.30px;font-size:12.1px;line-height:19px;color:#0a0a0a;transform-origin:0 50%;white-space:pre;font-weight:350;transform:scaleX(.9298);"><span style="color:#0a0a0a;">import ...</span></div>
<div class="t m" style="left:395.2px;top:290.30px;font-size:12.1px;line-height:19px;color:#0a0a0a;transform-origin:0 50%;white-space:pre;font-weight:350;transform:scaleX(.9298);"><span style="color:#8c8c8c;font-style:italic;"># <span class="j">現在のスクリプトファイルの位置を基準にして</span>results<span class="j">ディレクトリのパスを構築</span></span></div>
<div class="t m" style="left:395.2px;top:309.80px;font-size:12.1px;line-height:19px;color:#0a0a0a;transform-origin:0 50%;white-space:pre;font-weight:350;transform:scaleX(.9298);"><span style="color:#0a0a0a;">current_dir = Path(__file__).parent</span><span style="color:#8a8a8a;margin-left:17px;font-style:italic;">current_dir: WindowsPath(&#x27;D:/projects/lessons/pd_plt/lessons/10_step1/code&#x27;)</span></div>
<div class="t m" style="left:395.2px;top:329.30px;font-size:12.1px;line-height:19px;color:#0a0a0a;transform-origin:0 50%;white-space:pre;font-weight:350;transform:scaleX(.9298);"><span style="color:#0a0a0a;">results_dir = current_dir / </span><span style="color:#1f7d30;">&#x27;results&#x27;</span><span style="color:#8a8a8a;margin-left:17px;font-style:italic;">results_dir: WindowsPath(&#x27;D:/projects/lessons/pd_plt/lessons/10_step1/code/results&#x27;)</span></div>
<div class="t m" style="left:395.2px;top:368.30px;font-size:12.1px;line-height:19px;color:#0a0a0a;transform-origin:0 50%;white-space:pre;font-weight:350;transform:scaleX(.9298);"><span style="color:#8c8c8c;font-style:italic;"># dict <span class="j">を作成。キーは列名、値はリスト</span></span></div>
<div class="t m" style="left:395.2px;top:387.80px;font-size:12.1px;line-height:19px;color:#0a0a0a;transform-origin:0 50%;white-space:pre;font-weight:350;transform:scaleX(.9298);"><span style="color:#0a0a0a;">data = {</span><span style="color:#8a8a8a;margin-left:17px;font-style:italic;">data: {&#x27;<span style="font-style:normal"><span class="j">平均気温</span></span>(°C)&#x27;: [15.1, 24.0, 18.0, 27.5], &#x27;<span style="font-style:normal"><span class="j">都市</span></span>&#x27;: [&#x27;<span style="font-style:normal"><span class="j">東京</span></span>&#x27;, &#x27;<span style="font-style:normal"><span class="j">マイアミ</span></span>&#x27;, &#x27;<span style="font-style:normal"><span class="j">バルセロナ</span></span>&#x27;, &#x27;<span style="font-style:normal"><span class="j">シンガポール</span></span>&#x27;], &#x27;<span style="font-style:normal"><span class="j">降水量</span></span>(mm)&#x27;: [5.4, 61.9, 23.2, 234.2]}</span></div>
<div class="b" style="left:420px;top:388.8px;width:7px;height:7px;background:#f2a626;border-radius:50%;"></div>
<div class="t m" style="left:395.2px;top:407.30px;font-size:12.1px;line-height:19px;color:#0a0a0a;transform-origin:0 50%;white-space:pre;font-weight:350;transform:scaleX(.9298);"><span style="color:#0a0a0a;">    </span><span style="color:#1f7d30;">&#x27;<span class="j">都市</span>&#x27;</span><span style="color:#0a0a0a;">: [</span><span style="color:#1f7d30;">&#x27;<span class="j">東京</span>&#x27;</span><span style="color:#0a0a0a;">, </span><span style="color:#1f7d30;">&#x27;<span class="j">マイアミ</span>&#x27;</span><span style="color:#0a0a0a;">, </span><span style="color:#1f7d30;">&#x27;<span class="j">バルセロナ</span>&#x27;</span><span style="color:#0a0a0a;">, </span><span style="color:#1f7d30;">&#x27;<span class="j">シンガポール</span>&#x27;</span><span style="color:#0a0a0a;">],</span></div>
<div class="t m" style="left:395.2px;top:426.80px;font-size:12.1px;line-height:19px;color:#0a0a0a;transform-origin:0 50%;white-space:pre;font-weight:350;transform:scaleX(.9298);"><span style="color:#0a0a0a;">    </span><span style="color:#1f7d30;">&#x27;<span class="j">平均気温</span>(°C)&#x27;</span><span style="color:#0a0a0a;">: [</span><span style="color:#2a5bd7;">15.1</span><span style="color:#0a0a0a;">, </span><span style="color:#2a5bd7;">24.0</span><span style="color:#0a0a0a;">, </span><span style="color:#2a5bd7;">18.0</span><span style="color:#0a0a0a;">, </span><span style="color:#2a5bd7;">27.5</span><span style="color:#0a0a0a;">],</span></div>
<div class="t m" style="left:395.2px;top:446.30px;font-size:12.1px;line-height:19px;color:#0a0a0a;transform-origin:0 50%;white-space:pre;font-weight:350;transform:scaleX(.9298);"><span style="color:#0a0a0a;">    </span><span style="color:#1f7d30;">&#x27;<span class="j">降水量</span>(mm)&#x27;</span><span style="color:#0a0a0a;">: [</span><span style="color:#2a5bd7;">5.4</span><span style="color:#0a0a0a;">, </span><span style="color:#2a5bd7;">61.9</span><span style="color:#0a0a0a;">, </span><span style="color:#2a5bd7;">23.2</span><span style="color:#0a0a0a;">, </span><span style="color:#2a5bd7;">234.2</span><span style="color:#0a0a0a;">]</span></div>
<div class="t m" style="left:395.2px;top:465.80px;font-size:12.1px;line-height:19px;color:#0a0a0a;transform-origin:0 50%;white-space:pre;font-weight:350;transform:scaleX(.9298);"><span style="color:#0a0a0a;">}</span></div>
<div class="t m" style="left:395.2px;top:504.80px;font-size:12.1px;line-height:19px;color:#0a0a0a;transform-origin:0 50%;white-space:pre;font-weight:350;transform:scaleX(.9298);"><span style="color:#8c8c8c;font-style:italic;"># dict <span class="j">から</span> DataFrame <span class="j">を生成</span></span></div>
<div class="t m" style="left:395.2px;top:524.30px;font-size:12.1px;line-height:19px;color:#0a0a0a;transform-origin:0 50%;white-space:pre;font-weight:350;transform:scaleX(.9298);"><span style="color:#0a0a0a;">df = pd.DataFrame(data)</span><span style="color:#8a8a8a;margin-left:17px;font-style:italic;">df: </span><span style="color:#c98a2b;font-style:italic;">[&#x27;<span style="font-style:normal"><span class="j">都市</span></span>&#x27;, &#x27;<span style="font-style:normal"><span class="j">平均気温</span></span>(°C)&#x27;, &#x27;<span style="font-style:normal"><span class="j">降水量</span></span>(mm)&#x27;] [0     <span style="font-style:normal"><span class="j">東京</span></span>      15.1</span></div>
<div class="t m" style="left:395.2px;top:563.30px;font-size:12.1px;line-height:19px;color:#0a0a0a;transform-origin:0 50%;white-space:pre;font-weight:350;transform:scaleX(.9298);"><span style="color:#8c8c8c;font-style:italic;"># DataFrame <span class="j">を表示</span></span></div>
<div class="t m" style="left:395.2px;top:582.80px;font-size:12.1px;line-height:19px;color:#0a0a0a;transform-origin:0 50%;white-space:pre;font-weight:350;transform:scaleX(.9298);"><span style="color:#ffffff;">print(df)</span></div>
<svg class="b" style="left:482px;top:434px;" width="6" height="13" viewBox="0 0 6 13"><path d="M1 .500h1.500c.5 0 .5.500.5.500v11s0 .5-.5.500H1M5 .500H3.500c-.5 0-.5.500-.5.500M5 12.500H3.500c-.5 0-.5-.5-.5-.5" fill="none" stroke="#222" stroke-width=".9"/></svg>
<div class="b" style="left:337px;top:620px;width:661px;height:10.500px;overflow:hidden"><div class="t m" style="right:635.5px;top:1px;font-size:9.9px;line-height:15px;color:#a8adb8;letter-spacing:-.2px">27</div><div class="t m" style="left:58.2px;top:-.500px;font-size:12.1px;line-height:19px;color:#8c8c8c;font-style:italic;white-space:pre;transform-origin:0 50%;transform:scaleX(.9298)"># DataFrame <span class="j">を</span> JSON <span class="j">ファイルとして保存</span> (<span class="j">インデントと改行を追加</span>)</div></div>
<div class="b" style="left:394px;top:623px;width:598px;height:7.5px;background:rgba(150,150,155,.17);"></div>
<div class="b" style="left:998px;top:171px;width:8px;height:228px;background:rgba(160,162,168,.38);"></div>
<div class="b" style="left:996px;top:170px;width:10px;height:1.5px;background:#e6c64a;"></div>
<div class="b" style="left:995px;top:374.7px;width:11px;height:2px;background:#2f4f8f;"></div>
<div class="b" style="left:1006px;top:120px;width:404px;height:512px;background:#ffffff;"></div>
<div class="b" style="left:1006px;top:120px;width:1px;height:512px;background:#ebecf0;"></div>
<div class="b" style="left:1007px;top:120px;width:403px;height:32px;background:#f7f8fa;"></div>
<div class="b" style="left:1007px;top:152px;width:403px;height:1px;background:#ebecf0;"></div>
<div class="t" style="left:1015.5px;top:128.50px;font-size:9.75px;line-height:15px;color:#1a1a1a;transform-origin:0 50%;transform:scaleX(0.9523);font-weight:700;"><span style="display:inline-block;transform:scaleX(0.7);transform-origin:0 50%;margin-right:-17.55px">データビュー</span></div>
<div class="t" style="left:1075px;top:128.50px;font-size:9.75px;line-height:15px;color:#1a1a1a;transform-origin:0 50%;transform:scaleX(0.9827);">df</div>
<svg class="b" style="left:1091.0px;top:132.0px;" width="8" height="8" viewBox="0 0 16 16"><path d="M4 4l8 8M12 4l-8 8" fill="none" stroke="#8c8f99" stroke-width="1.6" stroke-linecap="round" stroke-linejoin="round"/></svg>
<div class="b" style="left:1067px;top:149px;width:40px;height:2.5px;background:#b4b8bf;border-radius:1.2px;"></div>
<div class="b" style="left:1007px;top:153px;width:403px;height:24px;background:#f7f8fa;"></div>
<div class="b" style="left:1013px;top:156px;width:18px;height:17px;background:#dfe1e5;border-radius:3px;"></div>
<svg class="b" style="left:1016px;top:159px;" width="12" height="11" viewBox="0 0 12 11"><rect x=".6" y=".6" width="10.800" height="9.800" rx="1" fill="none" stroke="#5a5d66" stroke-width="1"/><path d="M.6 3.800h10.800M4.300 .6v9.800M7.900 .6v9.800" stroke="#5a5d66" stroke-width=".9" fill="none"/></svg>
<svg class="b" style="left:1035px;top:159px;" width="12" height="11" viewBox="0 0 12 11"><path d="M.8 .5v9.800h10.700" fill="none" stroke="#5a5d66" stroke-width="1"/><path d="M2.500 7.500l2.500-3 2 1.500 3.500-4" fill="none" stroke="#5a5d66" stroke-width="1"/></svg>
<div class="b" style="left:1052.5px;top:157px;width:1px;height:15px;background:#dfe1e5;"></div>
<div class="t" style="left:1061px;top:158.00px;font-size:8.5px;line-height:13px;color:#5a5d66;transform-origin:0 50%;transform:scaleX(0.8337);">4 行</div>
<svg class="b" style="left:1077.5px;top:161.0px;" width="8" height="8" viewBox="0 0 16 16"><path d="M3.5 6l4.5 4.5L12.5 6" fill="none" stroke="#6c707e" stroke-width="1.9" stroke-linecap="round" stroke-linejoin="round"/></svg>
<div class="t" style="left:1093px;top:158.00px;font-size:8.5px;line-height:13px;color:#b4b8bf;transform-origin:0 50%;transform:scaleX(0.9052);">4 行 × 3 列</div>
<svg class="b" style="left:1329px;top:158px;" width="12" height="12" viewBox="0 0 12 12"><path d="M1.500 1.500h9l-3.300 4.500v4.500h-2.400v-4.500z" fill="none" stroke="#5a5d66" stroke-width="1" stroke-linejoin="round"/></svg>
<svg class="b" style="left:1348px;top:157px;" width="16" height="15" viewBox="0 0 16 15"><path d="M7.800 1.800l5.200 6-5.200 5.400-5.200-5.400z" fill="none" stroke="#80838d" stroke-width="1" stroke-linejoin="round"/><path d="M3.200 7.900h9.400" stroke="#3d74d8" stroke-width="1.100"/><circle cx="2.600" cy="11.300" r="1.400" fill="none" stroke="#3574f0" stroke-width="1"/><path d="M11.800 13.500l2.200-2.200v2.200z" fill="#5a5d66"/></svg>
<svg class="b" style="left:1369px;top:158px;" width="15" height="13" viewBox="0 0 15 13"><path d="M1.500 10.500v-7h2.500v7M4 10.500v-9h2.500v9M6.500 10.500v-5h2.500v5M.5 10.500h10" fill="none" stroke="#5a5d66" stroke-width="1"/><path d="M11 11l2 2v-2z" fill="#5a5d66"/></svg>
<svg class="b" style="left:1389.5px;top:160.0px;" width="10" height="10" viewBox="0 0 16 16"><circle cx="8" cy="2.500" r="1.450" fill="#6c707e"/><circle cx="8" cy="8" r="1.450" fill="#6c707e"/><circle cx="8" cy="13.500" r="1.450" fill="#6c707e"/></svg>
<div class="b" style="left:1007px;top:177.5px;width:36px;height:23.5px;background:#f4f7fd;"></div>
<div class="b" style="left:1043px;top:177.5px;width:353px;height:23.5px;background:#ebecf0;"></div>
<div class="b" style="left:1007px;top:200.5px;width:389px;height:1px;background:#dcdde2;"></div>
<svg class="b" style="left:1027.5px;top:185.5px;" width="5" height="9" viewBox="0 0 5 9"><path d="M.6 3.300l1.900-2 1.900 2zM.6 5.700l1.900 2 1.900-2z" fill="#5a5d66"/></svg>
<svg class="b" style="left:1110.0px;top:185.5px;" width="5" height="9" viewBox="0 0 5 9"><path d="M.6 3.300l1.900-2 1.900 2zM.6 5.700l1.900 2 1.900-2z" fill="#5a5d66"/></svg>
<svg class="b" style="left:1252.0px;top:185.5px;" width="5" height="9" viewBox="0 0 5 9"><path d="M.6 3.300l1.900-2 1.900 2zM.6 5.700l1.900 2 1.900-2z" fill="#5a5d66"/></svg>
<svg class="b" style="left:1380.0px;top:185.5px;" width="5" height="9" viewBox="0 0 5 9"><path d="M.6 3.300l1.900-2 1.900 2zM.6 5.700l1.900 2 1.900-2z" fill="#5a5d66"/></svg>
<svg class="b" style="left:1047px;top:183.5px;" width="11" height="12" viewBox="0 0 11 12"><path d="M5.500 .8l4.500 2.400v5.600l-4.500 2.400-4.500-2.400v-5.600z" fill="none" stroke="#b0b3bb" stroke-width=".9" stroke-linejoin="round"/><path d="M1 3.200l4.500 2.400 4.500-2.400M5.500 5.600v5.600" fill="none" stroke="#b0b3bb" stroke-width=".9"/></svg>
<div class="t m" style="left:1062.5px;top:181.70px;font-size:11.25px;line-height:17px;color:#1a1a1a;transform-origin:0 50%;transform:scaleX(0.9771);-webkit-text-stroke:.12px #1a1a1a;"><span class="j">都市</span></div>
<div class="t" style="left:1130.5px;top:185.30px;font-size:5px;line-height:8px;color:#b0b3bb;transform-origin:0 50%;transform:scaleX(0.9588);">123</div>
<div class="b" style="left:1130.0px;top:185.5px;width:9.5px;height:0.7px;background:#c9ccd3;"></div>
<div class="b" style="left:1130.0px;top:193.3px;width:9.5px;height:0.7px;background:#c9ccd3;"></div>
<div class="t" style="left:1272.5px;top:185.30px;font-size:5px;line-height:8px;color:#b0b3bb;transform-origin:0 50%;transform:scaleX(0.9588);">123</div>
<div class="b" style="left:1272.0px;top:185.5px;width:9.5px;height:0.7px;background:#c9ccd3;"></div>
<div class="b" style="left:1272.0px;top:193.3px;width:9.5px;height:0.7px;background:#c9ccd3;"></div>
<div class="t m" style="left:1144px;top:181.70px;font-size:11.25px;line-height:17px;color:#1a1a1a;transform-origin:0 50%;transform:scaleX(0.9996);-webkit-text-stroke:.12px #1a1a1a;"><span class="j">平均気温</span>(°C)</div>
<div class="t m" style="left:1286px;top:181.70px;font-size:11.25px;line-height:17px;color:#1a1a1a;transform-origin:0 50%;transform:scaleX(0.9871);-webkit-text-stroke:.12px #1a1a1a;"><span class="j">降水量</span>(mm)</div>
<div class="b" style="left:1007px;top:201px;width:389px;height:93px;background:#ffffff;"></div>
<div class="b" style="left:1126px;top:201px;width:141.5px;height:22.6px;background:#5889e9;"></div>
<div class="b" style="left:1268px;top:201px;width:128px;height:22.6px;background:#5587e8;"></div>
<div class="b" style="left:1007px;top:223.6px;width:119px;height:0.7px;background:#ebecf0;"></div>
<div class="t m" style="right:879.5px;top:203.50px;font-size:12.1px;line-height:18px;color:#1a1a1a;transform-origin:100% 50%;font-weight:700;transform:scaleX(.9298);">0</div>
<div class="t m" style="left:1047px;top:204.00px;font-size:11.25px;line-height:17px;color:#1a1a1a;transform-origin:0 50%;transform:scaleX(0.9771);"><span class="j">東京</span></div>
<div class="t m" style="right:655.5px;top:203.50px;font-size:12.1px;line-height:18px;color:#1a1a1a;transform-origin:100% 50%;-webkit-text-stroke:.2px #1a1a1a;transform:scaleX(.9298);">15.1</div>
<div class="t m" style="right:527px;top:203.50px;font-size:12.1px;line-height:18px;color:#1a1a1a;transform-origin:100% 50%;-webkit-text-stroke:.2px #1a1a1a;transform:scaleX(.9298);">5.4</div>
<div class="b" style="left:1126px;top:224.3px;width:141.5px;height:22.6px;background:#f3bfc0;"></div>
<div class="b" style="left:1268px;top:224.3px;width:128px;height:22.6px;background:#a5c0f4;"></div>
<div class="b" style="left:1007px;top:246.9px;width:119px;height:0.7px;background:#ebecf0;"></div>
<div class="t m" style="right:879.5px;top:226.80px;font-size:12.1px;line-height:18px;color:#1a1a1a;transform-origin:100% 50%;font-weight:700;transform:scaleX(.9298);">1</div>
<div class="t m" style="left:1047px;top:227.30px;font-size:11.25px;line-height:17px;color:#1a1a1a;transform-origin:0 50%;transform:scaleX(1.0049);"><span class="j">マイアミ</span></div>
<div class="t m" style="right:655.5px;top:226.80px;font-size:12.1px;line-height:18px;color:#1a1a1a;transform-origin:100% 50%;-webkit-text-stroke:.2px #1a1a1a;transform:scaleX(.9298);">24.0</div>
<div class="t m" style="right:527px;top:226.80px;font-size:12.1px;line-height:18px;color:#1a1a1a;transform-origin:100% 50%;-webkit-text-stroke:.2px #1a1a1a;transform:scaleX(.9298);">61.9</div>
<div class="b" style="left:1126px;top:247.5px;width:141.5px;height:22.6px;background:#a0bdf3;"></div>
<div class="b" style="left:1268px;top:247.5px;width:128px;height:22.6px;background:#6594eb;"></div>
<div class="b" style="left:1007px;top:270.1px;width:119px;height:0.7px;background:#ebecf0;"></div>
<div class="t m" style="right:879.5px;top:250.00px;font-size:12.1px;line-height:18px;color:#1a1a1a;transform-origin:100% 50%;font-weight:700;transform:scaleX(.9298);">2</div>
<div class="t m" style="left:1047px;top:250.50px;font-size:11.25px;line-height:17px;color:#1a1a1a;transform-origin:0 50%;transform:scaleX(0.9953);"><span class="j">バルセロナ</span></div>
<div class="t m" style="right:655.5px;top:250.00px;font-size:12.1px;line-height:18px;color:#1a1a1a;transform-origin:100% 50%;-webkit-text-stroke:.2px #1a1a1a;transform:scaleX(.9298);">18.0</div>
<div class="t m" style="right:527px;top:250.00px;font-size:12.1px;line-height:18px;color:#1a1a1a;transform-origin:100% 50%;-webkit-text-stroke:.2px #1a1a1a;transform:scaleX(.9298);">23.2</div>
<div class="b" style="left:1007px;top:270.8px;width:36px;height:22.6px;background:#a8d0fa;"></div>
<div class="b" style="left:1043px;top:270.8px;width:83px;height:22.6px;background:#edf3fc;"></div>
<div class="b" style="left:1126px;top:270.8px;width:141.5px;height:22.6px;background:#d85e68;"></div>
<div class="b" style="left:1268px;top:270.8px;width:128px;height:22.6px;background:#d85e68;"></div>
<div class="t m" style="right:879.5px;top:273.30px;font-size:12.1px;line-height:18px;color:#1a1a1a;transform-origin:100% 50%;font-weight:700;transform:scaleX(.9298);">3</div>
<div class="t m" style="left:1047px;top:273.80px;font-size:11.25px;line-height:17px;color:#1a1a1a;transform-origin:0 50%;transform:scaleX(1.0072);"><span class="j">シンガポール</span></div>
<div class="t m" style="right:655.5px;top:273.30px;font-size:12.1px;line-height:18px;color:#1a1a1a;transform-origin:100% 50%;-webkit-text-stroke:.2px #1a1a1a;transform:scaleX(.9298);">27.5</div>
<div class="t m" style="right:527px;top:273.30px;font-size:12.1px;line-height:18px;color:#1a1a1a;transform-origin:100% 50%;-webkit-text-stroke:.2px #1a1a1a;transform:scaleX(.9298);">234.2</div>
<div class="b" style="left:1043px;top:201px;width:0.7px;height:93px;background:#ebecf0;"></div>
<div class="b" style="left:1267px;top:201px;width:1px;height:93px;background:rgba(255,255,255,.4);"></div>
<div class="b" style="left:1409.5px;top:120px;width:30.5px;height:813px;background:#f7f8fa;"></div>
<div class="b" style="left:1408.8px;top:120px;width:1px;height:813px;background:#ebecf0;"></div>
<div class="b" style="left:1414px;top:274px;width:22px;height:22px;background:#dfe1e5;border-radius:4px;"></div>
<svg class="b" style="left:1417.5px;top:127.5px;" width="15" height="15" viewBox="0 0 20 20"><path d="M4 14.500c1.300-1.300 1.500-2.700 1.500-5 0-3 1.800-5 4.500-5s4.500 2 4.500 5c0 2.300.2 3.700 1.500 5z" fill="none" stroke="#585b63" stroke-width="1.55" stroke-linecap="round" stroke-linejoin="round"/><path d="M8.300 17c.4.500 1 .8 1.700.8s1.300-.3 1.700-.8" fill="none" stroke="#585b63" stroke-width="1.55" stroke-linecap="round" stroke-linejoin="round"/><circle cx="15.500" cy="4" r="2.600" fill="#3574f0"/></svg>
<svg class="b" style="left:1417.5px;top:157.5px;" width="15" height="15" viewBox="0 0 20 20"><path d="M10.500 10.500c-.8-.8-2-.3-2 .800 0 1.500 2 2.300 3.500 1.200 1.800-1.300 1.500-4-.500-5-2.500-1.200-5.500.3-6 3-.5 3 2 5.500 5 5.500 2.500 0 4.500-1 6-3M16 8c-.8-3-3.300-5-6.500-4.800C7 3.400 5 4.800 4 6.800" fill="none" stroke="#585b63" stroke-width="1.55" stroke-linecap="round" stroke-linejoin="round"/></svg>
<svg class="b" style="left:1417.5px;top:187.5px;" width="15" height="15" viewBox="0 0 20 20"><ellipse cx="10" cy="5" rx="6.500" ry="2.500" fill="none" stroke="#585b63" stroke-width="1.55" stroke-linecap="round" stroke-linejoin="round"/><path d="M3.500 5v10c0 1.400 2.900 2.500 6.500 2.500s6.500-1.100 6.500-2.500V5M3.500 8.300c0 1.400 2.900 2.500 6.500 2.500s6.500-1.100 6.500-2.500M3.500 11.700c0 1.400 2.900 2.500 6.500 2.500s6.500-1.100 6.500-2.500" fill="none" stroke="#585b63" stroke-width="1.55" stroke-linecap="round" stroke-linejoin="round"/></svg>
<svg class="b" style="left:1417.5px;top:217.5px;" width="15" height="15" viewBox="0 0 20 20"><path d="M4.500 8.500c-1-3.500 1.500-5.500 3.500-5 1 .2 1.600.8 2 1.500.4-.7 1-1.300 2-1.500 2-.5 4.500 1.500 3.500 5 1.300.8 2 2 2 3.500 0 3-3.300 5-7.500 5s-7.500-2-7.500-5c0-1.500.7-2.700 2-3.500z" fill="none" stroke="#585b63" stroke-width="1.55" stroke-linecap="round" stroke-linejoin="round"/><path d="M7.500 11.500v2.500M12.500 11.500v2.500M4.800 8.300c2.500-1 7.900-1 10.400 0" fill="none" stroke="#585b63" stroke-width="1.55" stroke-linecap="round" stroke-linejoin="round"/></svg>
<svg class="b" style="left:1417.5px;top:247.5px;" width="15" height="15" viewBox="0 0 20 20"><path d="M4.500 8.500c-1-3.500 1.500-5.500 3.500-5 1 .2 1.600.8 2 1.500.4-.7 1-1.300 2-1.500 2-.5 4.500 1.500 3.500 5 1.300.8 2 2 2 3.500 0 3-3.300 5-7.500 5s-7.500-2-7.500-5c0-1.500.7-2.700 2-3.500z" fill="none" stroke="#585b63" stroke-width="1.55" stroke-linecap="round" stroke-linejoin="round"/><path d="M7.500 11.500v2.500M12.500 11.500v2.500M4.800 8.300c2.500-1 7.900-1 10.400 0" fill="none" stroke="#585b63" stroke-width="1.55" stroke-linecap="round" stroke-linejoin="round"/><rect x="11" y="11.500" width="8" height="6" rx="1" fill="#585b63"/></svg>
<svg class="b" style="left:1417.5px;top:277.5px;" width="15" height="15" viewBox="0 0 20 20"><rect x="2.500" y="3" width="15" height="14" rx="1.500" fill="none" stroke="#585b63" stroke-width="1.55" stroke-linecap="round" stroke-linejoin="round"/><path d="M2.500 7.500h15M7.500 3v14M12.500 3v8" fill="none" stroke="#585b63" stroke-width="1.55" stroke-linecap="round" stroke-linejoin="round"/><circle cx="14.500" cy="15" r="3.800" fill="#ebecf0"/><ellipse cx="14.500" cy="15" rx="3.300" ry="2.300" fill="none" stroke="#585b63" stroke-width="1.2" stroke-linecap="round" stroke-linejoin="round"/><circle cx="14.500" cy="15" r=".9" fill="#585b63"/></svg>
<div class="b" style="left:31px;top:630.5px;width:1379px;height:302.5px;background:#f7f8fa;"></div>
<div class="b" style="left:31px;top:630.5px;width:1379px;height:1px;background:#ebecf0;"></div>
<div class="t" style="left:40px;top:639.50px;font-size:9.75px;line-height:15px;color:#1a1a1a;transform-origin:0 50%;transform:scaleX(1.0252);font-weight:700;"><span style="display:inline-block;transform:scaleX(0.7);transform-origin:0 50%;margin-right:-11.70px">デバッグ</span></div>
<svg class="b" style="left:89.0px;top:641.0px;opacity:.55;" width="12" height="12" viewBox="0 0 16 16"><path d="M7.9 1.2c-2.6 0-3.1 1.1-3.1 2.1v1.6h3.3v.7H3.4C2 5.6 1.2 6.8 1.2 8.3s.7 2.8 2 2.8h1.5V9.3c0-1.2 1-2.1 2.2-2.1h3c1 0 1.8-.8 1.8-1.8V3.3c0-1.2-1.3-2.1-3.8-2.1z" fill="#3d7fdb"/><g transform="rotate(180 8 8.1)"><path d="M7.9 1.2c-2.6 0-3.1 1.1-3.1 2.1v1.6h3.3v.7H3.4C2 5.6 1.2 6.8 1.2 8.3s.7 2.8 2 2.8h1.5V9.3c0-1.2 1-2.1 2.2-2.1h3c1 0 1.8-.8 1.8-1.8V3.3c0-1.2-1.3-2.1-3.8-2.1z" fill="#f5b400"/></g><circle cx="6.1" cy="3" r=".65" fill="#fff"/><circle cx="9.9" cy="13.2" r=".65" fill="#fff"/></svg>
<svg class="b" style="left:96px;top:640px;" width="6" height="6" viewBox="0 0 6 6"><circle cx="3" cy="3" r="2.500" fill="#5fb865" stroke="#f7f8fa" stroke-width=".8"/></svg>
<div class="t" style="left:104px;top:639.50px;font-size:9.75px;line-height:15px;color:#1a1a1a;transform-origin:0 50%;transform:scaleX(0.8771);">code10_050_filter</div>
<svg class="b" style="left:179.5px;top:643.0px;" width="8" height="8" viewBox="0 0 16 16"><path d="M4 4l8 8M12 4l-8 8" fill="none" stroke="#8c8f99" stroke-width="1.6" stroke-linecap="round" stroke-linejoin="round"/></svg>
<svg class="b" style="left:204.0px;top:641.0px;opacity:.55;" width="12" height="12" viewBox="0 0 16 16"><path d="M7.9 1.2c-2.6 0-3.1 1.1-3.1 2.1v1.6h3.3v.7H3.4C2 5.6 1.2 6.8 1.2 8.3s.7 2.8 2 2.8h1.5V9.3c0-1.2 1-2.1 2.2-2.1h3c1 0 1.8-.8 1.8-1.8V3.3c0-1.2-1.3-2.1-3.8-2.1z" fill="#3d7fdb"/><g transform="rotate(180 8 8.1)"><path d="M7.9 1.2c-2.6 0-3.1 1.1-3.1 2.1v1.6h3.3v.7H3.4C2 5.6 1.2 6.8 1.2 8.3s.7 2.8 2 2.8h1.5V9.3c0-1.2 1-2.1 2.2-2.1h3c1 0 1.8-.8 1.8-1.8V3.3c0-1.2-1.3-2.1-3.8-2.1z" fill="#f5b400"/></g><circle cx="6.1" cy="3" r=".65" fill="#fff"/><circle cx="9.9" cy="13.2" r=".65" fill="#fff"/></svg>
<svg class="b" style="left:211px;top:640px;" width="6" height="6" viewBox="0 0 6 6"><circle cx="3" cy="3" r="2.500" fill="#5fb865" stroke="#f7f8fa" stroke-width=".8"/></svg>
<div class="t" style="left:219px;top:639.50px;font-size:9.75px;line-height:15px;color:#1a1a1a;transform-origin:0 50%;transform:scaleX(0.8635);">code10_410_dict_and_json</div>
<svg class="b" style="left:330.5px;top:643.0px;" width="8" height="8" viewBox="0 0 16 16"><path d="M4 4l8 8M12 4l-8 8" fill="none" stroke="#8c8f99" stroke-width="1.6" stroke-linecap="round" stroke-linejoin="round"/></svg>
<div class="b" style="left:195px;top:660px;width:151px;height:2px;background:#b4b8bf;border-radius:1px;"></div>
<div class="b" style="left:31px;top:662.5px;width:1379px;height:1px;background:#ebecf0;"></div>
<svg class="b" style="left:39.5px;top:669.0px;" width="13" height="13" viewBox="0 0 16 16"><path d="M11.500 4.500A5.200 5.200 0 1 0 13 9.500" fill="none" stroke="#5f6b66" stroke-width="1.2" stroke-linecap="round" stroke-linejoin="round"/><path d="M8.800 4.600h3v-3" fill="none" stroke="#5f6b66" stroke-width="1.2" stroke-linecap="round" stroke-linejoin="round"/><ellipse cx="11" cy="12" rx="1.800" ry="2.200" fill="#f7f8fa" stroke="#57965c" stroke-width="1"/><path d="M8.300 12h1M12.800 12h1M9 9.800l.8.700M13 9.800l-.8.700" fill="none" stroke="#57965c" stroke-width="0.8" stroke-linecap="round" stroke-linejoin="round"/></svg>
<svg class="b" style="left:58.5px;top:669.0px;" width="13" height="13" viewBox="0 0 16 16"><rect x="3" y="3" width="10" height="10" rx="1.500" fill="none" stroke="#db5c5c" stroke-width="1.3" stroke-linecap="round" stroke-linejoin="round"/></svg>
<div class="b" style="left:77px;top:668px;width:1px;height:15px;background:#dfe1e5;"></div>
<svg class="b" style="left:82.5px;top:669.0px;" width="13" height="13" viewBox="0 0 16 16"><rect x="1.800" y="2.500" width="3" height="11" rx="1" fill="none" stroke="#57965c" stroke-width="1.3" stroke-linecap="round" stroke-linejoin="round"/><path d="M8 2.500l6.500 5.500-6.500 5.500z" fill="none" stroke="#57965c" stroke-width="1.3" stroke-linecap="round" stroke-linejoin="round"/></svg>
<svg class="b" style="left:102.5px;top:669.0px;" width="13" height="13" viewBox="0 0 16 16"><rect x="4" y="2.500" width="2.600" height="11" rx=".8" fill="none" stroke="#c4c7ce" stroke-width="1.1" stroke-linecap="round" stroke-linejoin="round"/><rect x="9.400" y="2.500" width="2.600" height="11" rx=".8" fill="none" stroke="#c4c7ce" stroke-width="1.1" stroke-linecap="round" stroke-linejoin="round"/></svg>
<svg class="b" style="left:122.5px;top:669.0px;" width="13" height="13" viewBox="0 0 16 16"><path d="M2 9c1.500-4 7.500-5 10.500-.5M12.800 5v3.700H9M3 13.500h10" fill="none" stroke="#818594" stroke-width="1.2" stroke-linecap="round" stroke-linejoin="round"/></svg>
<svg class="b" style="left:141.5px;top:669.0px;" width="13" height="13" viewBox="0 0 16 16"><path d="M8 1.500v9M4.500 7.500L8 11l3.500-3.500M3 14h10" fill="none" stroke="#818594" stroke-width="1.2" stroke-linecap="round" stroke-linejoin="round"/></svg>
<svg class="b" style="left:161.5px;top:669.0px;" width="13" height="13" viewBox="0 0 16 16"><path d="M8 1.500v9M4.500 7.500L8 11l3.500-3.500M3 14h10" fill="none" stroke="#3574f0" stroke-width="1.3" stroke-linecap="round" stroke-linejoin="round"/></svg>
<svg class="b" style="left:180.5px;top:669.0px;" width="13" height="13" viewBox="0 0 16 16"><path d="M8 11V2M4.500 5L8 1.500 11.500 5M3 14h10" fill="none" stroke="#818594" stroke-width="1.2" stroke-linecap="round" stroke-linejoin="round"/></svg>
<div class="b" style="left:199px;top:668px;width:1px;height:15px;background:#dfe1e5;"></div>
<svg class="b" style="left:205.5px;top:669.0px;" width="13" height="13" viewBox="0 0 16 16"><circle cx="6" cy="9.500" r="4" fill="none" stroke="#db5c5c" stroke-width="1.2" stroke-linecap="round" stroke-linejoin="round"/><circle cx="10" cy="6" r="4" fill="none" stroke="#db5c5c" stroke-width="1.2" stroke-linecap="round" stroke-linejoin="round"/></svg>
<svg class="b" style="left:224.5px;top:669.0px;" width="13" height="13" viewBox="0 0 16 16"><circle cx="8" cy="8" r="5" fill="none" stroke="#db5c5c" stroke-width="1.2" stroke-linecap="round" stroke-linejoin="round"/><path d="M3 13.500L13 2.500" fill="none" stroke="#db5c5c" stroke-width="1.2" stroke-linecap="round" stroke-linejoin="round"/></svg>
<svg class="b" style="left:246.0px;top:670.5px;" width="10" height="10" viewBox="0 0 16 16"><circle cx="8" cy="2.500" r="1.450" fill="#6c707e"/><circle cx="8" cy="8" r="1.450" fill="#6c707e"/><circle cx="8" cy="13.500" r="1.450" fill="#6c707e"/></svg>
<div class="t" style="left:280px;top:668.00px;font-size:9.75px;line-height:15px;color:#1a1a1a;transform-origin:0 50%;transform:scaleX(0.9324);font-weight:700;"><span style="display:inline-block;transform:scaleX(0.7);transform-origin:0 50%;margin-right:-14.63px">スレッドと</span>変数</div>
<div class="t" style="left:349px;top:668.00px;font-size:9.75px;line-height:15px;color:#1a1a1a;transform-origin:0 50%;transform:scaleX(0.9670);"><span style="display:inline-block;transform:scaleX(0.7);transform-origin:0 50%;margin-right:-14.63px">コンソール</span></div>
<div class="b" style="left:270px;top:686.5px;width:70px;height:2px;background:#b4b8bf;border-radius:1px;"></div>
<svg class="b" style="left:1395.5px;top:670px;" width="11" height="10" viewBox="0 0 11 10"><rect x=".6" y=".6" width="9.800" height="8.800" rx="1.500" fill="none" stroke="#6c707e"/><path d="M4.300 .6v8.800M4.300 5h6" stroke="#6c707e" fill="none"/></svg>
<div class="b" style="left:31px;top:688.5px;width:1379px;height:1px;background:#ebecf0;"></div>
<div class="b" style="left:161px;top:689px;width:1px;height:244px;background:#ebecf0;"></div>
<div class="b" style="left:40.5px;top:696px;width:10px;height:10px;background:#e8730c;border-radius:50%;"></div>
<div class="t" style="left:54px;top:693.50px;font-size:9.75px;line-height:15px;color:#1a1a1a;transform-origin:0 50%;transform:scaleX(0.9033);">MainThread</div>
<svg class="b" style="left:144.5px;top:697.5px;" width="8" height="8" viewBox="0 0 16 16"><path d="M3.5 6l4.5 4.5L12.5 6" fill="none" stroke="#6c707e" stroke-width="1.9" stroke-linecap="round" stroke-linejoin="round"/></svg>
<div class="b" style="left:31px;top:712.5px;width:130px;height:1px;background:#ebecf0;"></div>
<div class="b" style="left:37px;top:716px;width:124px;height:18px;background:#dfe1e5;border-radius:4px 0 0 4px;"></div>
<svg class="b" style="left:43.5px;top:720px;" width="9" height="10" viewBox="0 0 9 10"><rect x=".6" y="1.600" width="6.500" height="7.500" rx="1" fill="none" stroke="#5a5d66" stroke-width="1"/><path d="M2 1.600v-1h6v7.500h-1" fill="none" stroke="#5a5d66" stroke-width=".9"/></svg>
<div class="t" style="left:58px;top:717.50px;font-size:9.75px;line-height:15px;color:#1a1a1a;transform-origin:0 50%;transform:scaleX(0.8832);">&lt;module&gt;, code10_410_di</div>
<div class="b" style="left:31px;top:908px;width:80px;height:7.5px;background:#d4d5d8;"></div>
<div class="t" style="left:37px;top:918.50px;font-size:8.6px;line-height:13px;color:#9fa2aa;transform-origin:0 50%;transform:scaleX(1.0335);">Ctrl+Alt+上 <span style="display:inline-block;transform:scaleX(0.7);transform-origin:0 50%;margin-right:-7.74px">および</span> Ctrl+Alt+...</div>
<svg class="b" style="left:148.5px;top:921.5px;" width="7" height="7" viewBox="0 0 16 16"><path d="M4 4l8 8M12 4l-8 8" fill="none" stroke="#8c8f99" stroke-width="1.6" stroke-linecap="round" stroke-linejoin="round"/></svg>
<div class="b" style="left:162px;top:689px;width:1248px;height:23.5px;background:#ffffff;"></div>
<div class="b" style="left:162px;top:712.5px;width:1248px;height:1px;background:#ebecf0;"></div>
<div class="t m" style="left:170px;top:693.00px;font-size:9.75px;line-height:15px;color:#9a9da6;transform-origin:0 50%;transform:scaleX(0.9079);"><span class="j">式</span> (Enter) <span class="j">の評価またはウォッチ</span> (Ctrl+Shift+Enter) <span class="j">の追加</span></div>
<svg class="b" style="left:1368px;top:693px;" width="12" height="13" viewBox="0 0 12 13"><path d="M6 .5v7M2.500 4h7" stroke="#c1c4cb" stroke-width=".9" fill="none"/><circle cx="3.800" cy="10" r="1.700" fill="none" stroke="#c1c4cb" stroke-width=".8"/><circle cx="8.200" cy="10" r="1.700" fill="none" stroke="#c1c4cb" stroke-width=".8"/></svg>
<svg class="b" style="left:1392.5px;top:697.5px;" width="8" height="8" viewBox="0 0 16 16"><path d="M3.5 6l4.5 4.5L12.5 6" fill="none" stroke="#6c707e" stroke-width="1.9" stroke-linecap="round" stroke-linejoin="round"/></svg>
<div class="b" style="left:171px;top:752px;width:1228px;height:18px;background:#dfe1e5;border-radius:4px;"></div>
<svg class="b" style="left:172.5px;top:721.0px;" width="8" height="8" viewBox="0 0 16 16"><path d="M6 3.5l4.5 4.5L6 12.5" fill="none" stroke="#6c707e" stroke-width="1.9" stroke-linecap="round" stroke-linejoin="round"/></svg>
<svg class="b" style="left:188.0px;top:719.5px;" width="9" height="11" viewBox="0 0 9 11"><rect x=".6" y=".6" width="7.800" height="2.600" rx=".5" fill="#fdf3d9" stroke="#d9a343" stroke-width="1"/><rect x=".6" y="4.200" width="7.800" height="2.600" rx=".5" fill="#fdf3d9" stroke="#d9a343" stroke-width="1"/><rect x=".6" y="7.800" width="7.800" height="2.600" rx=".5" fill="#fdf3d9" stroke="#d9a343" stroke-width="1"/></svg>
<div class="t" style="left:201px;top:717.50px;font-size:9.75px;line-height:15px;color:#3b6fc9;transform-origin:0 50%;transform:scaleX(0.9226);white-space:pre;">current_dir</div>
<div class="t" style="left:247px;top:717.50px;font-size:9.75px;line-height:15px;color:#1a1a1a;transform-origin:0 50%;transform:scaleX(0.8767);white-space:pre;">=</div>
<div class="t" style="left:255px;top:717.50px;font-size:9.75px;line-height:15px;color:#9a9da6;transform-origin:0 50%;transform:scaleX(0.8922);white-space:pre;">{WindowsPath}</div>
<div class="t" style="left:317px;top:717.50px;font-size:9.75px;line-height:15px;color:#1a1a1a;transform-origin:0 50%;transform:scaleX(0.9228);white-space:pre;">WindowsPath(&#x27;D:/projects/lessons/pd_plt/lessons/10_step1/code&#x27;)</div>
<svg class="b" style="left:172.5px;top:739.0px;" width="8" height="8" viewBox="0 0 16 16"><path d="M6 3.5l4.5 4.5L6 12.5" fill="none" stroke="#6c707e" stroke-width="1.9" stroke-linecap="round" stroke-linejoin="round"/></svg>
<svg class="b" style="left:188.0px;top:737.5px;" width="9" height="11" viewBox="0 0 9 11"><rect x=".6" y=".6" width="7.800" height="2.600" rx=".5" fill="#fdf3d9" stroke="#d9a343" stroke-width="1"/><rect x=".6" y="4.200" width="7.800" height="2.600" rx=".5" fill="#fdf3d9" stroke="#d9a343" stroke-width="1"/><rect x=".6" y="7.800" width="7.800" height="2.600" rx=".5" fill="#fdf3d9" stroke="#d9a343" stroke-width="1"/></svg>
<div class="t" style="left:201px;top:735.50px;font-size:9.75px;line-height:15px;color:#3b6fc9;transform-origin:0 50%;transform:scaleX(0.8955);white-space:pre;">data</div>
<div class="t" style="left:220.5px;top:735.50px;font-size:9.75px;line-height:15px;color:#1a1a1a;transform-origin:0 50%;transform:scaleX(0.8767);white-space:pre;">=</div>
<div class="t" style="left:228px;top:735.50px;font-size:9.75px;line-height:15px;color:#9a9da6;transform-origin:0 50%;transform:scaleX(0.9222);white-space:pre;">{dict: 3}</div>
<div class="t" style="left:261px;top:735.50px;font-size:9.75px;line-height:15px;color:#1a1a1a;transform-origin:0 50%;transform:scaleX(0.9199);white-space:pre;">{&#x27;平均気温(°C)&#x27;: [15.1, 24.0, 18.0, 27.5], &#x27;都市&#x27;: [&#x27;東京&#x27;, &#x27;<span style="display:inline-block;transform:scaleX(0.7);transform-origin:0 50%;margin-right:-11.70px">マイアミ</span>&#x27;, &#x27;<span style="display:inline-block;transform:scaleX(0.7);transform-origin:0 50%;margin-right:-14.63px">バルセロナ</span>&#x27;, &#x27;<span style="display:inline-block;transform:scaleX(0.7);transform-origin:0 50%;margin-right:-17.55px">シンガポール</span>&#x27;], &#x27;降水量(mm)&#x27;: [5.4, 61.9, 23.2, 234.2]}</div>
<svg class="b" style="left:172.5px;top:757.0px;" width="8" height="8" viewBox="0 0 16 16"><path d="M6 3.5l4.5 4.5L6 12.5" fill="none" stroke="#6c707e" stroke-width="1.9" stroke-linecap="round" stroke-linejoin="round"/></svg>
<svg class="b" style="left:188.0px;top:755.5px;" width="9" height="11" viewBox="0 0 9 11"><rect x=".6" y=".6" width="7.800" height="2.600" rx=".5" fill="#fdf3d9" stroke="#d9a343" stroke-width="1"/><rect x=".6" y="4.200" width="7.800" height="2.600" rx=".5" fill="#fdf3d9" stroke="#d9a343" stroke-width="1"/><rect x=".6" y="7.800" width="7.800" height="2.600" rx=".5" fill="#fdf3d9" stroke="#d9a343" stroke-width="1"/></svg>
<div class="t" style="left:201px;top:753.50px;font-size:9.75px;line-height:15px;color:#3b6fc9;transform-origin:0 50%;transform:scaleX(0.9213);white-space:pre;">df</div>
<div class="t" style="left:211.5px;top:753.50px;font-size:9.75px;line-height:15px;color:#1a1a1a;transform-origin:0 50%;transform:scaleX(0.8767);white-space:pre;">=</div>
<div class="t" style="left:220px;top:753.50px;font-size:9.75px;line-height:15px;color:#9a9da6;transform-origin:0 50%;transform:scaleX(0.8508);white-space:pre;">{DataFrame: (4, 3)}</div>
<div class="t" style="left:294px;top:753.50px;font-size:9.75px;line-height:15px;color:#1a1a1a;transform-origin:0 50%;transform:scaleX(0.9417);white-space:pre;">[&#x27;都市&#x27;, &#x27;平均気温(°C)&#x27;, &#x27;降水量(mm)&#x27;] [0    東京     15.1     5.4] [1  <span style="display:inline-block;transform:scaleX(0.7);transform-origin:0 50%;margin-right:-11.70px">マイアミ</span>     24.0    61.9] [2 <span style="display:inline-block;transform:scaleX(0.7);transform-origin:0 50%;margin-right:-14.63px">バルセロナ</span>     18.0    23.2]</div>
<div class="t" style="left:748px;top:753.50px;font-size:9.75px;line-height:15px;color:#3b6fc9;transform-origin:0 50%;transform:scaleX(0.8861);white-space:pre;">...DataFrame <span style="display:inline-block;transform:scaleX(0.7);transform-origin:0 50%;margin-right:-8.78px">として</span>表示</div>
<svg class="b" style="left:172.5px;top:775.0px;" width="8" height="8" viewBox="0 0 16 16"><path d="M6 3.5l4.5 4.5L6 12.5" fill="none" stroke="#6c707e" stroke-width="1.9" stroke-linecap="round" stroke-linejoin="round"/></svg>
<svg class="b" style="left:188.0px;top:773.5px;" width="9" height="11" viewBox="0 0 9 11"><rect x=".6" y=".6" width="7.800" height="2.600" rx=".5" fill="#fdf3d9" stroke="#d9a343" stroke-width="1"/><rect x=".6" y="4.200" width="7.800" height="2.600" rx=".5" fill="#fdf3d9" stroke="#d9a343" stroke-width="1"/><rect x=".6" y="7.800" width="7.800" height="2.600" rx=".5" fill="#fdf3d9" stroke="#d9a343" stroke-width="1"/></svg>
<div class="t" style="left:201px;top:771.50px;font-size:9.75px;line-height:15px;color:#3b6fc9;transform-origin:0 50%;transform:scaleX(0.8892);white-space:pre;">results_dir</div>
<div class="t" style="left:244px;top:771.50px;font-size:9.75px;line-height:15px;color:#1a1a1a;transform-origin:0 50%;transform:scaleX(0.8767);white-space:pre;">=</div>
<div class="t" style="left:252px;top:771.50px;font-size:9.75px;line-height:15px;color:#9a9da6;transform-origin:0 50%;transform:scaleX(0.8922);white-space:pre;">{WindowsPath}</div>
<div class="t" style="left:314px;top:771.50px;font-size:9.75px;line-height:15px;color:#1a1a1a;transform-origin:0 50%;transform:scaleX(0.9260);white-space:pre;">WindowsPath(&#x27;D:/projects/lessons/pd_plt/lessons/10_step1/code/results&#x27;)</div>
<svg class="b" style="left:172.5px;top:793.0px;" width="8" height="8" viewBox="0 0 16 16"><path d="M6 3.5l4.5 4.5L6 12.5" fill="none" stroke="#6c707e" stroke-width="1.9" stroke-linecap="round" stroke-linejoin="round"/></svg>
<svg class="b" style="left:188px;top:791.5px;" width="10" height="11" viewBox="0 0 10 11"><rect x=".6" y=".6" width="3.300" height="4" rx=".5" fill="none" stroke="#3574f0"/><rect x="5.800" y=".6" width="3.300" height="4" rx=".5" fill="none" stroke="#3574f0"/><rect x=".6" y="6.300" width="3.300" height="4" rx=".5" fill="none" stroke="#3574f0"/><rect x="5.800" y="6.300" width="3.300" height="4" rx=".5" fill="none" stroke="#3574f0"/></svg>
<div class="t" style="left:201px;top:789.50px;font-size:9.75px;line-height:15px;color:#1a1a1a;transform-origin:0 50%;transform:scaleX(0.9231);">特殊変数</div>
<div class="b" style="left:0px;top:932.5px;width:1440px;height:22px;background:#f7f8fa;"></div>
<div class="b" style="left:0px;top:932.5px;width:1440px;height:1px;background:#ebecf0;"></div>
<svg class="b" style="left:9px;top:939px;" width="8" height="8" viewBox="0 0 8 8"><rect x=".8" y=".8" width="6.400" height="6.400" rx="1.500" fill="none" stroke="#3574f0" stroke-width="1.100"/></svg>
<div class="t" style="left:19.5px;top:936.00px;font-size:9.75px;line-height:15px;color:#6c707e;transform-origin:0 50%;transform:scaleX(0.9406);">pd_plt</div>
<svg class="b" style="left:49.0px;top:940.0px;" width="7" height="7" viewBox="0 0 16 16"><path d="M6 3.5l4.5 4.5L6 12.5" fill="none" stroke="#8c8f99" stroke-width="1.9" stroke-linecap="round" stroke-linejoin="round"/></svg>
<div class="t" style="left:62.5px;top:936.00px;font-size:9.75px;line-height:15px;color:#6c707e;transform-origin:0 50%;transform:scaleX(0.8469);">lessons</div>
<svg class="b" style="left:96.0px;top:940.0px;" width="7" height="7" viewBox="0 0 16 16"><path d="M6 3.5l4.5 4.5L6 12.5" fill="none" stroke="#8c8f99" stroke-width="1.9" stroke-linecap="round" stroke-linejoin="round"/></svg>
<div class="t" style="left:109px;top:936.00px;font-size:9.75px;line-height:15px;color:#6c707e;transform-origin:0 50%;transform:scaleX(0.8224);">10_step1</div>
<svg class="b" style="left:147.5px;top:940.0px;" width="7" height="7" viewBox="0 0 16 16"><path d="M6 3.5l4.5 4.5L6 12.5" fill="none" stroke="#8c8f99" stroke-width="1.9" stroke-linecap="round" stroke-linejoin="round"/></svg>
<div class="t" style="left:160.5px;top:936.00px;font-size:9.75px;line-height:15px;color:#6c707e;transform-origin:0 50%;transform:scaleX(0.9217);">code</div>
<svg class="b" style="left:185.5px;top:940.0px;" width="7" height="7" viewBox="0 0 16 16"><path d="M6 3.5l4.5 4.5L6 12.5" fill="none" stroke="#8c8f99" stroke-width="1.9" stroke-linecap="round" stroke-linejoin="round"/></svg>
<svg class="b" style="left:198.5px;top:937.5px;" width="11" height="11" viewBox="0 0 16 16"><path d="M7.9 1.2c-2.6 0-3.1 1.1-3.1 2.1v1.6h3.3v.7H3.4C2 5.6 1.2 6.8 1.2 8.3s.7 2.8 2 2.8h1.5V9.3c0-1.2 1-2.1 2.2-2.1h3c1 0 1.8-.8 1.8-1.8V3.3c0-1.2-1.3-2.1-3.8-2.1z" fill="#3d7fdb"/><g transform="rotate(180 8 8.1)"><path d="M7.9 1.2c-2.6 0-3.1 1.1-3.1 2.1v1.6h3.3v.7H3.4C2 5.6 1.2 6.8 1.2 8.3s.7 2.8 2 2.8h1.5V9.3c0-1.2 1-2.1 2.2-2.1h3c1 0 1.8-.8 1.8-1.8V3.3c0-1.2-1.3-2.1-3.8-2.1z" fill="#f5b400"/></g><circle cx="6.1" cy="3" r=".65" fill="#fff"/><circle cx="9.9" cy="13.2" r=".65" fill="#fff"/></svg>
<div class="t" style="left:213px;top:936.00px;font-size:9.75px;line-height:15px;color:#6c707e;transform-origin:0 50%;transform:scaleX(0.8694);">code10_410_dict_and_json.py</div>
<div class="t" style="left:1113.5px;top:936.00px;font-size:9.75px;line-height:15px;color:#6c707e;transform-origin:0 50%;transform:scaleX(0.8551);">16:43 (31 文字)</div>
<div class="t" style="left:1182.5px;top:936.00px;font-size:9.75px;line-height:15px;color:#6c707e;transform-origin:0 50%;transform:scaleX(0.7853);">CRLF</div>
<div class="t" style="left:1214px;top:936.00px;font-size:9.75px;line-height:15px;color:#6c707e;transform-origin:0 50%;transform:scaleX(0.8688);">UTF-8</div>
<svg class="b" style="left:1249px;top:938px;" width="13" height="11" viewBox="0 0 13 11"><path d="M3 4.500c-.6-2.300 1-3.500 2.300-3.200.6.100 1 .5 1.200 1 .2-.5.600-.9 1.200-1 1.300-.3 2.900.9 2.300 3.200.8.500 1.300 1.300 1.300 2.300 0 2-2.100 3.200-4.800 3.200s-4.800-1.200-4.800-3.200c0-1 .5-1.800 1.300-2.300z" fill="none" stroke="#6c707e" stroke-width="1"/><path d="M5 6.500v1.500M8 6.500v1.500" stroke="#6c707e" stroke-width="1"/></svg>
<div class="t" style="left:1276px;top:936.00px;font-size:9.75px;line-height:15px;color:#6c707e;transform-origin:0 50%;transform:scaleX(0.9913);">4 <span style="display:inline-block;transform:scaleX(0.7);transform-origin:0 50%;margin-right:-11.70px">スペース</span></div>
<div class="t" style="left:1323px;top:936.00px;font-size:9.75px;line-height:15px;color:#6c707e;transform-origin:0 50%;transform:scaleX(0.8996);">Python 3.13 (pd_plt)</div>
<svg class="b" style="left:1415.5px;top:937.5px;" width="11" height="11" viewBox="0 0 11 11"><rect x="1" y="4.800" width="6.500" height="5" rx=".8" fill="none" stroke="#6c707e"/><path d="M6 4.800v-1.500c0-1.300.9-2 2-2s2 .7 2 2v.8" fill="none" stroke="#6c707e"/></svg>
<div class="b" style="left:0px;top:954.5px;width:1440px;height:35.5px;background:#dbe6f5;background:linear-gradient(90deg,#dde9f6 0,#d9e5f4 25%,#d3dcef 33%,#d7e0f1 45%,#d5def0 60%,#d3dbee 70%,#dce7f3 78%,#e1ebf5 100%);"></div>
<div class="b" style="left:0px;top:954px;width:1440px;height:1px;background:#c3c8d2;"></div>
<svg class="b" style="left:13px;top:961px;" width="24" height="22" viewBox="0 0 24 22"><path d="M6 13.500c-2.500 0-4-1.500-4-3.500s1.500-3.500 3.500-3.500c.5-2.500 2.500-4 5-4 2.800 0 5 2 5.300 4.500 2 .2 3.200 1.500 3.200 3.200 0 1.900-1.500 3.300-3.500 3.300z" fill="#d7dde8" stroke="#b9c3d4" stroke-width=".6"/><path d="M8 13c-1.500 2-2.200 3.200-2.200 4.200a2.200 2.200 0 0 0 4.400 0c0-1-.7-2.200-2.200-4.200zM15 13.500c-1.500 2-2.200 3.200-2.200 4.200a2.200 2.200 0 0 0 4.400 0c0-1-.7-2.200-2.200-4.200z" fill="#2b7de0"/></svg>
<div class="t" style="left:38px;top:959.30px;font-size:9.3px;line-height:14px;color:#1a1a1a;transform-origin:0 50%;transform:scaleX(0.8421);">14°C</div>
<div class="t" style="left:38px;top:971.00px;font-size:9.3px;line-height:14px;color:#4a4d55;transform-origin:0 50%;transform:scaleX(0.9128);">雨</div>
<div class="b" style="left:495.5px;top:964px;width:8.3px;height:8.3px;background:#1e8fe0;background:linear-gradient(135deg,#3db3f2,#0f78d4);"></div>
<div class="b" style="left:504.5px;top:964px;width:8.3px;height:8.3px;background:#1e8fe0;background:linear-gradient(135deg,#3db3f2,#0f78d4);"></div>
<div class="b" style="left:495.5px;top:973px;width:8.3px;height:8.3px;background:#1e8fe0;background:linear-gradient(135deg,#3db3f2,#0f78d4);"></div>
<div class="b" style="left:504.5px;top:973px;width:8.3px;height:8.3px;background:#1e8fe0;background:linear-gradient(135deg,#3db3f2,#0f78d4);"></div>
<div class="b" style="left:524px;top:961px;width:163px;height:22.5px;background:#f8fafd;border-radius:11.500px;box-shadow:0 0 0 .5px #d5dbe6;"></div>
<svg class="b" style="left:531px;top:965.5px;" width="12" height="13" viewBox="0 0 12 13"><circle cx="5" cy="5" r="3.800" fill="none" stroke="#1a1a1a" stroke-width="1.300"/><path d="M7.800 8l3 3.500" stroke="#1a1a1a" stroke-width="1.400"/></svg>
<div class="t" style="left:551px;top:964.50px;font-size:9.75px;line-height:15px;color:#6a6d75;transform-origin:0 50%;transform:scaleX(1.0256);">検索</div>
<svg class="b" style="left:648px;top:963px;" width="34" height="19" viewBox="0 0 34 19"><path d="M3 6c2-3 6-3 7-1 2-1 4 0 4 2-1 2-4 3-7 2-2 0-4-1-4-3z" fill="none" stroke="#5a86b8" stroke-width=".9"/><path d="M12 15l5-9" stroke="#e08a2a" stroke-width="1.800"/><path d="M17 6l1-2" stroke="#3a7a3a" stroke-width="1.500"/><path d="M22 4c2 0 4 1 3 3s-4 1-4 3 3 2 4 1M24 11c2 0 3 2 1 4" fill="none" stroke="#c46a3a" stroke-width="1.200"/><circle cx="27" cy="4" r="1.300" fill="#6ab04a"/><circle cx="21" cy="6" r="1" fill="#d94a4a"/><circle cx="29" cy="8" r="1" fill="#4a8ad9"/><circle cx="9" cy="3" r="1" fill="#4aa04a"/></svg>
<div class="b" style="left:702px;top:964px;width:10px;height:10px;background:#e9e9ec;border-radius:1.500px;"></div>
<div class="b" style="left:697px;top:967px;width:11px;height:11px;background:#2b2b2e;border-radius:1.500px;"></div>
<div class="b" style="left:701px;top:967px;width:7px;height:7px;background:#9a9a9d;border-radius:1px;opacity:.55;"></div>
<svg class="b" style="left:730px;top:963.5px;" width="18" height="18" viewBox="0 0 18 18"><circle cx="9" cy="9" r="8.500" fill="#fff"/><path d="M9 9L1.640 4.750A8.500 8.500 0 0 1 16.360 4.750z" fill="#e33b2e"/><path d="M9 9l7.360-4.250A8.500 8.500 0 0 1 9 17.500z" fill="#f7c325"/><path d="M9 9v8.500A8.500 8.500 0 0 1 1.640 4.750z" fill="#2da94f"/><circle cx="9" cy="9" r="4" fill="#fff"/><circle cx="9" cy="9" r="3.200" fill="#3f7fe8"/></svg>
<div class="b" style="left:741px;top:960.5px;width:11px;height:11px;background:#e8771e;border-radius:50%;"></div>
<div class="t" style="left:744.8px;top:961.00px;font-size:6.5px;line-height:10px;color:#fff;transform-origin:0 50%;font-weight:700;">k</div>
<div class="b" style="left:737px;top:984.3px;width:4px;height:1.5px;background:#8a8f99;border-radius:1px;"></div>
<div class="b" style="left:757px;top:958px;width:29px;height:29.5px;background:#efb0b0;border-radius:4px;box-shadow:0 0 0 .5px #e79a9a;"></div>
<div class="b" style="left:763px;top:964px;width:17px;height:17px;background:#0c0c0c;border-radius:4px;"></div>
<svg class="b" style="left:766px;top:967px;" width="11" height="11" viewBox="0 0 11 11"><path d="M5.500 1l4.200 2.200v4.600l-4.200 2.200-4.200-2.200V3.200z" fill="#fff"/><path d="M1.300 3.200l4.200 2.300 4.200-2.300M5.500 5.500V10" stroke="#0c0c0c" stroke-width=".9" fill="none"/><path d="M4 6.500l1.500.8v1.500" stroke="#0c0c0c" stroke-width=".8" fill="none"/></svg>
<div class="b" style="left:764px;top:983.3px;width:15px;height:2px;background:#d92a2a;border-radius:1px;"></div>
<svg class="b" style="left:796px;top:964px;" width="19" height="17" viewBox="0 0 19 17"><path d="M1 2.500c0-.8.5-1.300 1.300-1.300h4.500l1.700 1.800h8c.8 0 1.300.5 1.300 1.300v9.500c0 .8-.5 1.300-1.300 1.300H2.300c-.8 0-1.300-.5-1.300-1.300z" fill="#f5b81e"/><path d="M1 5.500h16.800v8.300c0 .8-.5 1.300-1.300 1.300H2.300c-.8 0-1.300-.5-1.300-1.300z" fill="#fbd352"/><rect x="5" y="11" width="9" height="4.500" rx=".8" fill="#2f86d8"/></svg>
<div class="b" style="left:803px;top:984.3px;width:4px;height:1.5px;background:#8a8f99;border-radius:1px;"></div>
<svg class="b" style="left:829px;top:963.5px;" width="18" height="18" viewBox="0 0 18 18"><circle cx="9" cy="9" r="8.500" fill="#fff"/><path d="M9 9L1.640 4.750A8.500 8.500 0 0 1 16.360 4.750z" fill="#e33b2e"/><path d="M9 9l7.360-4.250A8.500 8.500 0 0 1 9 17.500z" fill="#f7c325"/><path d="M9 9v8.500A8.500 8.500 0 0 1 1.640 4.750z" fill="#2da94f"/><circle cx="9" cy="9" r="4" fill="#fff"/><circle cx="9" cy="9" r="3.200" fill="#3f7fe8"/></svg>
<div class="b" style="left:839px;top:959.5px;width:12px;height:12px;background:#6fb3ea;border-radius:50%;box-shadow:0 0 0 1px #dfeaf6;"></div>
<svg class="b" style="left:841px;top:962.0px;" width="8" height="7" viewBox="0 0 8 7"><path d="M4 1l3 4.500h-6z" fill="#fff"/></svg>
<div class="b" style="left:836px;top:984.3px;width:4px;height:1.5px;background:#8a8f99;border-radius:1px;"></div>
<div class="b" style="left:857px;top:957.5px;width:28.5px;height:30px;background:#eef3fa;border-radius:4px;"></div>
<svg class="b" style="left:862px;top:963px;" width="19" height="19" viewBox="0 0 19 19"><defs><linearGradient id="pcg" x1="0" y1="0" x2="1" y2="1"><stop offset="0" stop-color="#21d789"/><stop offset=".5" stop-color="#17b6d8"/><stop offset="1" stop-color="#f7e43a"/></linearGradient></defs><rect x=".5" y=".5" width="18" height="18" rx="3.500" fill="url(#pcg)"/><rect x="3.200" y="3.200" width="12.600" height="12.600" fill="#0a0a0a"/><text x="4.600" y="9.300" font-family="Liberation Sans,sans-serif" font-weight="700" font-size="5.600" fill="#fff">PC</text><rect x="4.700" y="12.800" width="4.800" height="1" fill="#fff"/></svg>
<div class="b" style="left:864px;top:984.3px;width:14px;height:2px;background:#1773d1;border-radius:1px;"></div>
<svg class="b" style="left:895px;top:962.5px;" width="17" height="20" viewBox="0 0 17 20"><rect x="1.500" y="2" width="12" height="16.500" rx="1.500" fill="#f4f5f7" stroke="#b8bdc8" stroke-width=".8"/><rect x="1.500" y="2" width="12" height="3" rx="1" fill="#c9ced8"/><path d="M4 8h7M4 10.500h7M4 13h5" stroke="#a9aebb" stroke-width=".8"/><path d="M13.500 2l2 1.200-5.500 10.500-2.300 1.300.3-2.600z" fill="#e89a2a" stroke="#8a5a1a" stroke-width=".5"/></svg>
<div class="b" style="left:901px;top:984.3px;width:4px;height:1.5px;background:#8a8f99;border-radius:1px;"></div>
<svg class="b" style="left:927px;top:963.5px;" width="19" height="18" viewBox="0 0 19 18"><rect x="5" y="1" width="13.500" height="16" rx="1.500" fill="#21a366"/><rect x="5" y="1" width="13.500" height="5.300" fill="#33c481"/><rect x="5" y="11.700" width="13.500" height="5.300" rx="1" fill="#185c37"/><rect x="11.700" y="1" width="6.800" height="16" fill="#107c41" opacity=".55"/><rect x=".5" y="4.200" width="9.600" height="9.600" rx="1.200" fill="#107c41"/><text x="2.900" y="11.600" font-family="Liberation Sans,sans-serif" font-weight="700" font-size="7" fill="#fff">X</text></svg>
<div class="b" style="left:934px;top:984.3px;width:4px;height:1.5px;background:#8a8f99;border-radius:1px;"></div>
<svg class="b" style="left:1143px;top:968px;" width="10" height="7" viewBox="0 0 10 7"><path d="M1 6l4-4.500 4 4.500" fill="none" stroke="#1f1f1f" stroke-width="1.300"/></svg>
<svg class="b" style="left:1164px;top:965.5px;" width="15" height="13" viewBox="0 0 15 13"><path d="M3.800 8.800c-1.600 0-2.600-1-2.600-2.300s1-2.300 2.300-2.300c.3-1.600 1.600-2.600 3.300-2.600 1.800 0 3.200 1.300 3.500 2.900 1.300.1 2.100 1 2.100 2.100 0 1.200-1 2.200-2.300 2.200z" fill="#a9adb5" stroke="#4a4d55" stroke-width=".9"/><circle cx="10.800" cy="9.300" r="3" fill="#e0363f"/><path d="M9.700 8.200l2.200 2.200M11.900 8.200l-2.200 2.200" stroke="#fff" stroke-width=".8"/></svg>
<svg class="b" style="left:1189px;top:964.5px;" width="15" height="15" viewBox="0 0 15 15"><path d="M12.500 6A5.500 5.500 0 0 0 2.500 5M2 9a5.500 5.500 0 0 0 5 4" fill="none" stroke="#1f1f1f" stroke-width="1.200"/><path d="M13 2.500v3.700H9.300M1.500 12.500V8.800h3.700" fill="none" stroke="#1f1f1f" stroke-width="1.200"/><circle cx="10.800" cy="11.300" r="3" fill="#1a78e0"/></svg>
<svg class="b" style="left:1212px;top:964.5px;" width="16" height="15" viewBox="0 0 16 15"><rect x="1.500" y="5.500" width="8" height="8" rx="1" fill="#dc2e3f"/><path d="M6 3l3 2.200-3 2.200-3-2.200zM11.500 2l2.800 2-2.800 2-2.800-2zM11.500 7.500l2.800 2-2.800 2-2.800-2z" fill="#1f1f1f"/><text x="3.600" y="12.300" font-family="Liberation Sans,sans-serif" font-weight="700" font-size="6.500" fill="#fff">4</text></svg>
<svg class="b" style="left:1239px;top:964px;" width="10" height="16" viewBox="0 0 10 16"><rect x="2.800" y="1" width="4.400" height="8.500" rx="2.200" fill="#7db4ee" stroke="#1f5fb8" stroke-width=".9"/><path d="M1 7.500c0 2.500 1.800 4 4 4s4-1.500 4-4M5 11.500v3" fill="none" stroke="#1f5fb8" stroke-width=".9"/></svg>
<div class="t" style="left:1263.5px;top:964.00px;font-size:11px;line-height:16px;color:#b3b7bf;transform-origin:0 50%;font-weight:400;">A</div>
<div class="b" style="left:1290.5px;top:965.5px;width:10.5px;height:10.5px;background:#1a6fd6;border-radius:50%;"></div>
<div class="b" style="left:1298px;top:974px;width:4.5px;height:4.5px;background:#e8762a;border-radius:50%;"></div>
<div class="b" style="left:1300.5px;top:973.5px;width:3px;height:3px;background:#d83a3a;border-radius:50%;"></div>
<svg class="b" style="left:1318px;top:966px;" width="14" height="11" viewBox="0 0 14 11"><path d="M1 4c3.500-3.500 8.500-3.500 12 0M3 6.200c2.300-2.300 5.700-2.300 8 0M5 8.300c1.200-1.200 2.800-1.200 4 0" fill="none" stroke="#1f1f1f" stroke-width="1.100"/><circle cx="7" cy="9.800" r="1" fill="#1f1f1f"/></svg>
<svg class="b" style="left:1336px;top:966px;" width="13" height="11" viewBox="0 0 13 11"><path d="M1 4h2.200l3-2.700v8.400l-3-2.700H1z" fill="none" stroke="#1f1f1f" stroke-width="1"/><path d="M8 3.500c1 1 1 3 0 4" fill="none" stroke="#1f1f1f" stroke-width="1"/><path d="M9.800 2c1.800 2 1.800 5 0 7" fill="none" stroke="#b5b9c2" stroke-width="1"/></svg>
<svg class="b" style="left:1353px;top:965.5px;" width="15" height="12" viewBox="0 0 15 12"><rect x="1" y="3" width="11" height="7" rx="1.500" fill="none" stroke="#1f1f1f" stroke-width="1.100"/><rect x="2.500" y="4.500" width="8" height="4" rx=".5" fill="#1f1f1f"/><path d="M13 5.200v2.600" stroke="#1f1f1f" stroke-width="1.300"/><path d="M3 .5v3M1.800 1.300h2.400" stroke="#1f1f1f" stroke-width=".9"/></svg>
<div class="t" style="right:494.5px;top:959.00px;font-size:9.3px;line-height:14px;color:#1a1a1a;transform-origin:100% 50%;transform:scaleX(0.9080);">11:14</div>
<div class="t" style="right:494.5px;top:971.00px;font-size:9.3px;line-height:14px;color:#1a1a1a;transform-origin:100% 50%;transform:scaleX(0.9778);">2025/10/25</div>
<div class="b" style="left:1622px;top:481px;width:118.5px;height:118.5px;background:#2f9bd2;border-radius:50%;overflow:hidden;"></div>
<svg class="b" style="left:1622px;top:481px;" width="118.5" height="118.5" viewBox="0 0 118.5 118.5"><defs><clipPath id="av"><circle cx="59.250" cy="59.250" r="59.250"/></clipPath></defs><g clip-path="url(#av)"><path d="M59.600 26.800L26.300 83.700h66z" fill="#fff"/><path d="M62 27.200l1.400.300 31.600 55.200v1h-.9z" fill="#fff"/><path d="M66 29.500L95 57.200v23.600z" fill="#fff"/><path d="M0 26.900h59.600l-1.900 3.200L0 30.800z" fill="#fff"/><path d="M53.5 36.7L-7.5 30.5M47.5 46.3L-7.2 33.0M42.1 55.4L-8.0 35.8M36.7 64.4L-7.9 37.8M32.2 72.8L-8.1 39.9M27.2 81.8L-7.4 42.7" stroke="#fff" stroke-width="1.600" fill="none"/><circle cx="18.100" cy="99.300" r="4.800" fill="#fff"/></g></svg>
<div class="t" style="left:1455px;top:645.00px;font-size:18px;line-height:27px;color:#ffffff;transform-origin:0 50%;transform:scaleX(1.0000);font-family:"Liberation Sans","Noto Sans CJK JP",sans-serif;">小川慶一</div>
</body></html>
